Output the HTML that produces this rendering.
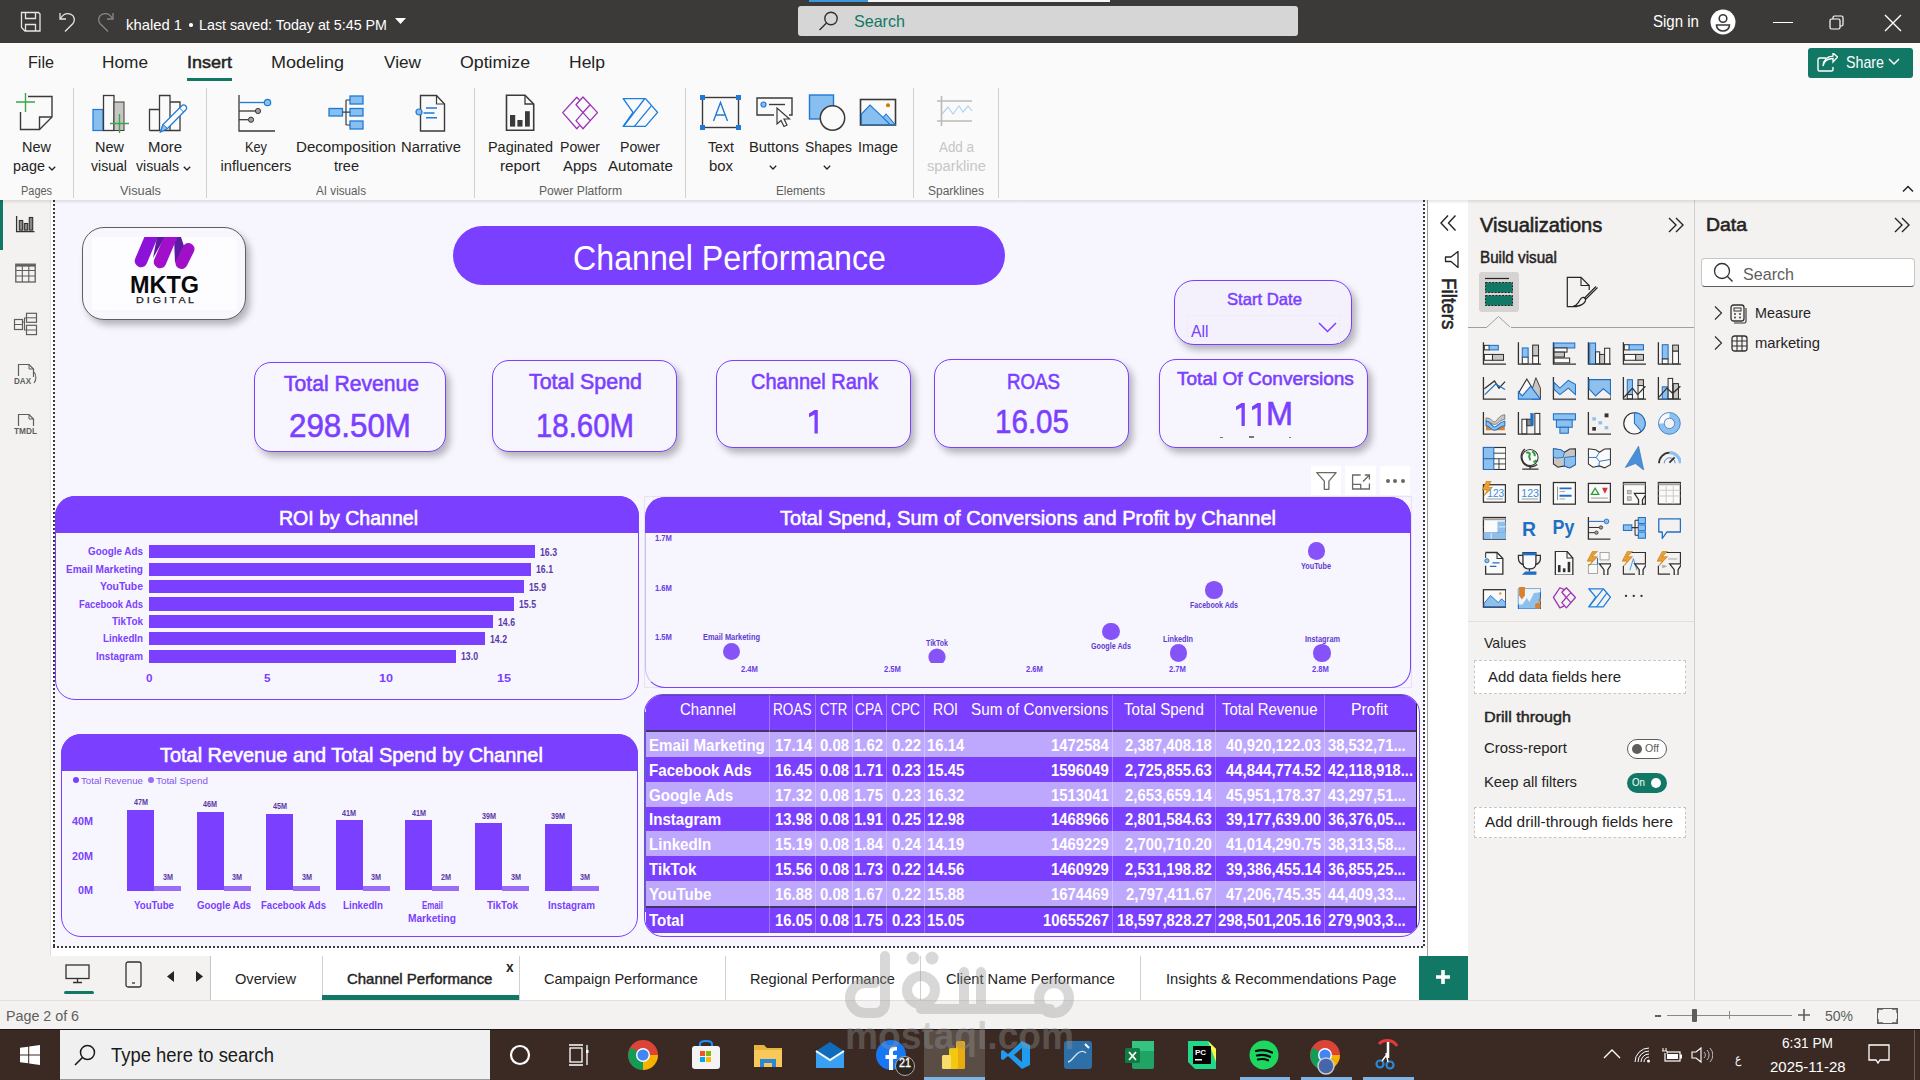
<!DOCTYPE html><html><head><meta charset="utf-8"><style>html,body{margin:0;padding:0;width:1920px;height:1080px;overflow:hidden;background:#fff;}body{position:relative;font-family:"Liberation Sans",sans-serif;}</style></head><body><div style="position:absolute;left:50px;top:200px;width:1378px;height:756px;background:#ffffff;"></div><div style="position:absolute;left:54px;top:200px;width:1370px;height:747px;background:#f7f5fe;"></div><div style="position:absolute;left:53px;top:200px;width:2px;height:747px;background:none;background-image:linear-gradient(#3b3a39 50%,transparent 50%);background-size:2px 4px;"></div><div style="position:absolute;left:1423px;top:200px;width:2px;height:747px;background:none;background-image:linear-gradient(#3b3a39 50%,transparent 50%);background-size:2px 4px;"></div><div style="position:absolute;left:53px;top:946px;width:1372px;height:2px;background:none;background-image:linear-gradient(90deg,#3b3a39 50%,transparent 50%);background-size:4px 2px;"></div><div style="position:absolute;left:82px;top:227px;width:163.5px;height:92.5px;background:#f8f7fd;border:1px solid #605e5c;border-radius:22px;box-sizing:border-box;box-shadow:4px 5px 7px rgba(0,0,0,0.27);"></div><div style="position:absolute;left:92px;top:237px;width:145px;height:73px;background:#fdfcff;"></div><svg style="position:absolute;left:128px;top:237px" width="70" height="36" viewBox="128 237 70 36"><path d="M157 237L165 237L153 258Z" fill="#5a1a9e"/><path d="M174 237L181 237L185 249L175 263Z" fill="#5e1aa2"/><path d="M141 261L152 235" stroke="#8c12da" stroke-width="12.5" stroke-linecap="round" fill="none"/><path d="M160 262L171.5 235" stroke="#a20fcb" stroke-width="12.5" stroke-linecap="round" fill="none"/><path d="M181.5 263L188.5 249" stroke="#a010c9" stroke-width="12" stroke-linecap="round" fill="none"/><rect x="128" y="224" width="70" height="13" fill="#fdfcff"/></svg><div style="position:absolute;left:130.00px;top:272.50px;font-size:24.56px;line-height:24.56px;color:#0a0a0a;font-weight:700;transform:scaleX(0.9541);transform-origin:0 0;white-space:pre;">MKTG</div><div style="position:absolute;left:135.70px;top:296.16px;font-size:8.43px;line-height:8.43px;color:#1a1a1a;-webkit-text-stroke:0.25px #1a1a1a;transform:scaleX(1.2717);transform-origin:0 0;white-space:pre;">D I G I T A L</div><div style="position:absolute;left:453px;top:226px;width:552px;height:59px;background:#7b3fff;border-radius:30px;"></div><div style="position:absolute;left:572.50px;top:241.35px;font-size:35.61px;line-height:35.61px;color:#fff;transform:scaleX(0.9035);transform-origin:0 0;white-space:pre;">Channel Performance</div><div style="position:absolute;left:1174px;top:280px;width:178px;height:65px;background:#f4f1fd;border:1.6px solid #7b3fff;border-radius:20px;box-sizing:border-box;box-shadow:4px 5px 7px rgba(0,0,0,0.27);"></div><div style="position:absolute;left:1187px;top:315px;width:153px;height:28px;background:none;border:1px dotted #ebe7f6;border-bottom:none;box-sizing:border-box;"></div><div style="position:absolute;left:1227.00px;top:290.92px;font-size:16.28px;line-height:16.28px;color:#7b3fff;-webkit-text-stroke:0.49px #7b3fff;transform:scaleX(1.0233);transform-origin:0 0;white-space:pre;">Start Date</div><div style="position:absolute;left:1191.00px;top:322.92px;font-size:16.28px;line-height:16.28px;color:#7b3fff;transform:scaleX(0.9731);transform-origin:0 0;white-space:pre;">All</div><svg style="position:absolute;left:1318px;top:322px;" width="19" height="11" viewBox="0 0 19 11"><path d="M1 1l8.5 8.5L18 1" fill="none" stroke="#7b3fff" stroke-width="1.5"/></svg><div style="position:absolute;left:254px;top:362px;width:192px;height:90px;background:#f7f5fe;border:1.8px solid #7b3fff;border-radius:17px;box-sizing:border-box;box-shadow:4px 5px 7px rgba(0,0,0,0.27);"></div><div style="position:absolute;left:284.00px;top:372.62px;font-size:22.53px;line-height:22.53px;color:#7b3fff;-webkit-text-stroke:0.60px #7b3fff;transform:scaleX(0.9373);transform-origin:0 0;white-space:pre;">Total Revenue</div><div style="position:absolute;left:289.00px;top:408.69px;font-size:33.43px;line-height:33.43px;color:#7b3fff;-webkit-text-stroke:0.60px #7b3fff;transform:scaleX(0.9376);transform-origin:0 0;white-space:pre;">298.50M</div><div style="position:absolute;left:492px;top:360px;width:185px;height:92px;background:#f7f5fe;border:1.8px solid #7b3fff;border-radius:17px;box-sizing:border-box;box-shadow:4px 5px 7px rgba(0,0,0,0.27);"></div><div style="position:absolute;left:529.00px;top:370.92px;font-size:22.53px;line-height:22.53px;color:#7b3fff;-webkit-text-stroke:0.60px #7b3fff;transform:scaleX(0.9496);transform-origin:0 0;white-space:pre;">Total Spend</div><div style="position:absolute;left:536.00px;top:408.69px;font-size:33.43px;line-height:33.43px;color:#7b3fff;-webkit-text-stroke:0.60px #7b3fff;transform:scaleX(0.8790);transform-origin:0 0;white-space:pre;">18.60M</div><div style="position:absolute;left:716px;top:360px;width:195px;height:88px;background:#f7f5fe;border:1.8px solid #7b3fff;border-radius:17px;box-sizing:border-box;box-shadow:4px 5px 7px rgba(0,0,0,0.27);"></div><div style="position:absolute;left:751.00px;top:370.54px;font-size:21.80px;line-height:21.80px;color:#7b3fff;-webkit-text-stroke:0.60px #7b3fff;transform:scaleX(0.9189);transform-origin:0 0;white-space:pre;">Channel Rank</div><div style="position:absolute;left:934px;top:359px;width:195px;height:89px;background:#f7f5fe;border:1.8px solid #7b3fff;border-radius:17px;box-sizing:border-box;box-shadow:4px 5px 7px rgba(0,0,0,0.27);"></div><div style="position:absolute;left:1007.00px;top:370.54px;font-size:21.80px;line-height:21.80px;color:#7b3fff;-webkit-text-stroke:0.60px #7b3fff;transform:scaleX(0.8578);transform-origin:0 0;white-space:pre;">ROAS</div><div style="position:absolute;left:995.00px;top:404.69px;font-size:33.43px;line-height:33.43px;color:#7b3fff;-webkit-text-stroke:0.60px #7b3fff;transform:scaleX(0.8847);transform-origin:0 0;white-space:pre;">16.05</div><div style="position:absolute;left:1159px;top:359px;width:209px;height:89px;background:#f7f5fe;border:1.8px solid #7b3fff;border-radius:17px;box-sizing:border-box;box-shadow:4px 5px 7px rgba(0,0,0,0.27);"></div><div style="position:absolute;left:1177.00px;top:370.22px;font-size:18.17px;line-height:18.17px;color:#7b3fff;-webkit-text-stroke:0.55px #7b3fff;transform:scaleX(1.0495);transform-origin:0 0;white-space:pre;">Total Of Conversions</div><svg style="position:absolute;left:808.2px;top:409px" width="10.8" height="25.600000000000023"><path d="M6.5 1H9.8V24.600000000000023H6.5V5.5L1 8.2V4.6Z" fill="#7b3fff"/></svg><svg style="position:absolute;left:1235.0px;top:401.5px" width="10.8" height="25.0"><path d="M6.5 1H9.8V24.0H6.5V5.5L1 8.2V4.6Z" fill="#7b3fff"/></svg><svg style="position:absolute;left:1250.9px;top:401.5px" width="10.8" height="25.0"><path d="M6.5 1H9.8V24.0H6.5V5.5L1 8.2V4.6Z" fill="#7b3fff"/></svg><div style="position:absolute;left:1266.00px;top:397.19px;font-size:33.43px;line-height:33.43px;color:#7b3fff;-webkit-text-stroke:0.60px #7b3fff;transform:scaleX(0.9696);transform-origin:0 0;white-space:pre;">M</div><div style="position:absolute;left:1220px;top:437px;width:3px;height:1px;background:#777;"></div><div style="position:absolute;left:1249px;top:436px;width:5px;height:2px;background:#777;"></div><div style="position:absolute;left:1289px;top:437px;width:2px;height:1px;background:#777;"></div><div style="position:absolute;left:1311px;top:466px;width:30px;height:28.5px;background:#ffffff;"></div><div style="position:absolute;left:1345px;top:466px;width:31px;height:28.5px;background:#ffffff;"></div><div style="position:absolute;left:1380px;top:466px;width:30px;height:28.5px;background:#ffffff;"></div><svg style="position:absolute;left:1311px;top:466px;" width="30" height="28" viewBox="0 0 30 28"><path d="M5.7 6.6h19.4l-7.2 8.5v8.2h-4.6v-8.2z" fill="none" stroke="#6b6866" stroke-width="1.3" stroke-linejoin="round"/></svg><svg style="position:absolute;left:1345px;top:466px;" width="31" height="28" viewBox="0 0 31 28"><path d="M15.7 9H7.6v14h16.8v-5.6M7.6 18.3h8.1V23" fill="none" stroke="#6b6866" stroke-width="1.3"/><path d="M18 15.5L24.4 9M19.8 9h4.6v4.6" fill="none" stroke="#6b6866" stroke-width="1.3"/></svg><div style="position:absolute;left:1386px;top:479px;width:4px;height:4px;background:#6b6866;border-radius:50%;"></div><div style="position:absolute;left:1393.4px;top:479px;width:4px;height:4px;background:#6b6866;border-radius:50%;"></div><div style="position:absolute;left:1400.9px;top:479px;width:4px;height:4px;background:#6b6866;border-radius:50%;"></div><div style="position:absolute;left:55px;top:496px;width:584px;height:204px;background:#f7f5fe;border:1.6px solid #7b3fff;border-radius:20px;box-sizing:border-box;overflow:hidden;"></div><div style="position:absolute;left:55px;top:496px;width:584px;height:37px;background:#7b3fff;border-radius:20px 20px 0 0;"></div><div style="position:absolute;left:279.00px;top:507.16px;font-size:21.08px;line-height:21.08px;color:#fff;-webkit-text-stroke:0.60px #fff;transform:scaleX(0.9269);transform-origin:0 0;white-space:pre;">ROI by Channel</div><div style="position:absolute;left:149px;top:545.0px;width:386px;height:13.3px;background:#7b3fff;"></div><div style="position:absolute;left:88.30px;top:546.19px;font-size:10.76px;line-height:10.76px;color:#7b3fff;font-weight:700;transform:scaleX(0.9174);transform-origin:0 0;white-space:pre;">Google Ads</div><div style="position:absolute;left:540.00px;top:547.74px;font-size:10.47px;line-height:10.47px;color:#5a3aa8;font-weight:700;transform:scaleX(0.8347);transform-origin:0 0;white-space:pre;">16.3</div><div style="position:absolute;left:149px;top:562.5px;width:382px;height:13.3px;background:#7b3fff;"></div><div style="position:absolute;left:66.30px;top:563.64px;font-size:10.76px;line-height:10.76px;color:#7b3fff;font-weight:700;transform:scaleX(0.9335);transform-origin:0 0;white-space:pre;">Email Marketing</div><div style="position:absolute;left:536.00px;top:565.19px;font-size:10.47px;line-height:10.47px;color:#5a3aa8;font-weight:700;transform:scaleX(0.8347);transform-origin:0 0;white-space:pre;">16.1</div><div style="position:absolute;left:149px;top:579.9px;width:375.3px;height:13.3px;background:#7b3fff;"></div><div style="position:absolute;left:100.30px;top:581.09px;font-size:10.76px;line-height:10.76px;color:#7b3fff;font-weight:700;transform:scaleX(0.9682);transform-origin:0 0;white-space:pre;">YouTube</div><div style="position:absolute;left:529.30px;top:582.64px;font-size:10.47px;line-height:10.47px;color:#5a3aa8;font-weight:700;transform:scaleX(0.8347);transform-origin:0 0;white-space:pre;">15.9</div><div style="position:absolute;left:149px;top:597.4px;width:365.4px;height:13.3px;background:#7b3fff;"></div><div style="position:absolute;left:79.30px;top:598.54px;font-size:10.76px;line-height:10.76px;color:#7b3fff;font-weight:700;transform:scaleX(0.8753);transform-origin:0 0;white-space:pre;">Facebook Ads</div><div style="position:absolute;left:519.40px;top:600.09px;font-size:10.47px;line-height:10.47px;color:#5a3aa8;font-weight:700;transform:scaleX(0.8347);transform-origin:0 0;white-space:pre;">15.5</div><div style="position:absolute;left:149px;top:614.8px;width:344.4px;height:13.3px;background:#7b3fff;"></div><div style="position:absolute;left:112.30px;top:615.99px;font-size:10.76px;line-height:10.76px;color:#7b3fff;font-weight:700;transform:scaleX(0.9202);transform-origin:0 0;white-space:pre;">TikTok</div><div style="position:absolute;left:498.40px;top:617.54px;font-size:10.47px;line-height:10.47px;color:#5a3aa8;font-weight:700;transform:scaleX(0.8347);transform-origin:0 0;white-space:pre;">14.6</div><div style="position:absolute;left:149px;top:632.2px;width:335.6px;height:13.3px;background:#7b3fff;"></div><div style="position:absolute;left:103.30px;top:633.44px;font-size:10.76px;line-height:10.76px;color:#7b3fff;font-weight:700;transform:scaleX(0.9046);transform-origin:0 0;white-space:pre;">LinkedIn</div><div style="position:absolute;left:489.60px;top:634.99px;font-size:10.47px;line-height:10.47px;color:#5a3aa8;font-weight:700;transform:scaleX(0.8347);transform-origin:0 0;white-space:pre;">14.2</div><div style="position:absolute;left:149px;top:649.7px;width:307px;height:13.3px;background:#7b3fff;"></div><div style="position:absolute;left:96.30px;top:650.89px;font-size:10.76px;line-height:10.76px;color:#7b3fff;font-weight:700;transform:scaleX(0.9143);transform-origin:0 0;white-space:pre;">Instagram</div><div style="position:absolute;left:461.00px;top:652.44px;font-size:10.47px;line-height:10.47px;color:#5a3aa8;font-weight:700;transform:scaleX(0.8347);transform-origin:0 0;white-space:pre;">13.0</div><div style="position:absolute;left:145.95px;top:673.32px;font-size:10.61px;line-height:10.61px;color:#7b3fff;font-weight:700;transform:scaleX(1.1018);transform-origin:0 0;white-space:pre;">0</div><div style="position:absolute;left:263.95px;top:673.32px;font-size:10.61px;line-height:10.61px;color:#7b3fff;font-weight:700;transform:scaleX(1.1018);transform-origin:0 0;white-space:pre;">5</div><div style="position:absolute;left:379.00px;top:673.32px;font-size:10.61px;line-height:10.61px;color:#7b3fff;font-weight:700;transform:scaleX(1.1865);transform-origin:0 0;white-space:pre;">10</div><div style="position:absolute;left:497.00px;top:673.32px;font-size:10.61px;line-height:10.61px;color:#7b3fff;font-weight:700;transform:scaleX(1.1865);transform-origin:0 0;white-space:pre;">15</div><div style="position:absolute;left:644px;top:496px;width:768px;height:192px;background:none;border:1px solid #e6e3ee;box-sizing:border-box;"></div><div style="position:absolute;left:644.5px;top:497px;width:766.5px;height:191px;background:#f7f5fe;border:1.6px solid #7b3fff;border-left-color:#cdbdff;border-radius:20px;box-sizing:border-box;overflow:hidden;"></div><div style="position:absolute;left:644.5px;top:497px;width:766.5px;height:36px;background:#7b3fff;border-radius:20px 20px 0 0;"></div><div style="position:absolute;left:780.00px;top:507.16px;font-size:21.08px;line-height:21.08px;color:#fff;-webkit-text-stroke:0.60px #fff;transform:scaleX(0.9514);transform-origin:0 0;white-space:pre;">Total Spend, Sum of Conversions and Profit by Channel</div><div style="position:absolute;left:654.50px;top:533.97px;font-size:9.01px;line-height:9.01px;color:#6a3de8;font-weight:700;transform:scaleX(0.8486);transform-origin:0 0;white-space:pre;">1.7M</div><div style="position:absolute;left:654.50px;top:583.97px;font-size:9.01px;line-height:9.01px;color:#6a3de8;font-weight:700;transform:scaleX(0.8486);transform-origin:0 0;white-space:pre;">1.6M</div><div style="position:absolute;left:654.50px;top:633.07px;font-size:9.01px;line-height:9.01px;color:#6a3de8;font-weight:700;transform:scaleX(0.8486);transform-origin:0 0;white-space:pre;">1.5M</div><div style="position:absolute;left:741.20px;top:664.57px;font-size:9.01px;line-height:9.01px;color:#6a3de8;font-weight:700;transform:scaleX(0.8486);transform-origin:0 0;white-space:pre;">2.4M</div><div style="position:absolute;left:883.90px;top:664.57px;font-size:9.01px;line-height:9.01px;color:#6a3de8;font-weight:700;transform:scaleX(0.8486);transform-origin:0 0;white-space:pre;">2.5M</div><div style="position:absolute;left:1026.40px;top:664.57px;font-size:9.01px;line-height:9.01px;color:#6a3de8;font-weight:700;transform:scaleX(0.8486);transform-origin:0 0;white-space:pre;">2.6M</div><div style="position:absolute;left:1168.80px;top:664.57px;font-size:9.01px;line-height:9.01px;color:#6a3de8;font-weight:700;transform:scaleX(0.8486);transform-origin:0 0;white-space:pre;">2.7M</div><div style="position:absolute;left:1311.50px;top:664.57px;font-size:9.01px;line-height:9.01px;color:#6a3de8;font-weight:700;transform:scaleX(0.8486);transform-origin:0 0;white-space:pre;">2.8M</div><div style="position:absolute;left:723.0px;top:642.8px;width:17.2px;height:17.2px;background:#8553f8;border-radius:50%;"></div><div style="position:absolute;left:703.00px;top:632.82px;font-size:9.30px;line-height:9.30px;color:#5f3bd0;font-weight:700;transform:scaleX(0.7990);transform-origin:0 0;white-space:pre;">Email Marketing</div><svg style="position:absolute;left:927.6px;top:647.8px;" width="18" height="15" viewBox="0 0 18 15"><circle cx="9" cy="9" r="8.6" fill="#8553f8"/></svg><div style="position:absolute;left:925.60px;top:638.72px;font-size:9.30px;line-height:9.30px;color:#5f3bd0;font-weight:700;transform:scaleX(0.7551);transform-origin:0 0;white-space:pre;">TikTok</div><div style="position:absolute;left:1102.4px;top:622.5px;width:17.2px;height:17.2px;background:#8553f8;border-radius:50%;"></div><div style="position:absolute;left:1091.00px;top:641.62px;font-size:9.30px;line-height:9.30px;color:#5f3bd0;font-weight:700;transform:scaleX(0.7714);transform-origin:0 0;white-space:pre;">Google Ads</div><div style="position:absolute;left:1169.7px;top:644.4px;width:17.2px;height:17.2px;background:#8553f8;border-radius:50%;"></div><div style="position:absolute;left:1163.30px;top:634.52px;font-size:9.30px;line-height:9.30px;color:#5f3bd0;font-weight:700;transform:scaleX(0.7845);transform-origin:0 0;white-space:pre;">LinkedIn</div><div style="position:absolute;left:1205.4px;top:581.4px;width:17.2px;height:17.2px;background:#8553f8;border-radius:50%;"></div><div style="position:absolute;left:1190.00px;top:600.62px;font-size:9.30px;line-height:9.30px;color:#5f3bd0;font-weight:700;transform:scaleX(0.7590);transform-origin:0 0;white-space:pre;">Facebook Ads</div><div style="position:absolute;left:1307.6px;top:542.4px;width:17.2px;height:17.2px;background:#8553f8;border-radius:50%;"></div><div style="position:absolute;left:1301.20px;top:561.52px;font-size:9.30px;line-height:9.30px;color:#5f3bd0;font-weight:700;transform:scaleX(0.7810);transform-origin:0 0;white-space:pre;">YouTube</div><div style="position:absolute;left:1313.4px;top:644.4px;width:17.2px;height:17.2px;background:#8553f8;border-radius:50%;"></div><div style="position:absolute;left:1304.50px;top:634.82px;font-size:9.30px;line-height:9.30px;color:#5f3bd0;font-weight:700;transform:scaleX(0.7873);transform-origin:0 0;white-space:pre;">Instagram</div><div style="position:absolute;left:61px;top:733.5px;width:577px;height:203.5px;background:#f7f5fe;border:1.6px solid #7b3fff;border-radius:20px;box-sizing:border-box;overflow:hidden;"></div><div style="position:absolute;left:61px;top:733.5px;width:577px;height:37px;background:#7b3fff;border-radius:20px 20px 0 0;"></div><div style="position:absolute;left:160.00px;top:744.16px;font-size:21.08px;line-height:21.08px;color:#fff;-webkit-text-stroke:0.60px #fff;transform:scaleX(0.9451);transform-origin:0 0;white-space:pre;">Total Revenue and Total Spend by Channel</div><div style="position:absolute;left:73px;top:777px;width:6px;height:6px;background:#7b3fff;border-radius:50%;"></div><div style="position:absolute;left:80.50px;top:775.63px;font-size:9.88px;line-height:9.88px;color:#7f55f0;transform:scaleX(0.9812);transform-origin:0 0;white-space:pre;">Total Revenue</div><div style="position:absolute;left:148px;top:777px;width:6px;height:6px;background:#9a6cf8;border-radius:50%;"></div><div style="position:absolute;left:155.50px;top:775.63px;font-size:9.88px;line-height:9.88px;color:#7f55f0;transform:scaleX(0.9960);transform-origin:0 0;white-space:pre;">Total Spend</div><div style="position:absolute;left:71.80px;top:815.85px;font-size:11.05px;line-height:11.05px;color:#7b3fff;font-weight:700;transform:scaleX(0.9774);transform-origin:0 0;white-space:pre;">40M</div><div style="position:absolute;left:71.80px;top:850.85px;font-size:11.05px;line-height:11.05px;color:#7b3fff;font-weight:700;transform:scaleX(0.9774);transform-origin:0 0;white-space:pre;">20M</div><div style="position:absolute;left:77.80px;top:884.85px;font-size:11.05px;line-height:11.05px;color:#7b3fff;font-weight:700;transform:scaleX(0.9776);transform-origin:0 0;white-space:pre;">0M</div><div style="position:absolute;left:127.0px;top:809.5px;width:27px;height:81.0px;background:#7b3fff;"></div><div style="position:absolute;left:154.0px;top:886px;width:27px;height:4.5px;background:#9a6cf8;"></div><div style="position:absolute;left:133.50px;top:797.99px;font-size:8.29px;line-height:8.29px;color:#5a3aa8;font-weight:700;transform:scaleX(0.8688);transform-origin:0 0;white-space:pre;">47M</div><div style="position:absolute;left:162.50px;top:873.49px;font-size:8.29px;line-height:8.29px;color:#5a3aa8;font-weight:700;transform:scaleX(0.8690);transform-origin:0 0;white-space:pre;">3M</div><div style="position:absolute;left:134.00px;top:900.02px;font-size:10.61px;line-height:10.61px;color:#7b3fff;font-weight:700;transform:scaleX(0.9130);transform-origin:0 0;white-space:pre;">YouTube</div><div style="position:absolute;left:196.6px;top:811.7px;width:27px;height:78.8px;background:#7b3fff;"></div><div style="position:absolute;left:223.6px;top:886px;width:27px;height:4.5px;background:#9a6cf8;"></div><div style="position:absolute;left:203.10px;top:800.19px;font-size:8.29px;line-height:8.29px;color:#5a3aa8;font-weight:700;transform:scaleX(0.8688);transform-origin:0 0;white-space:pre;">46M</div><div style="position:absolute;left:232.10px;top:873.49px;font-size:8.29px;line-height:8.29px;color:#5a3aa8;font-weight:700;transform:scaleX(0.8690);transform-origin:0 0;white-space:pre;">3M</div><div style="position:absolute;left:196.60px;top:900.02px;font-size:10.61px;line-height:10.61px;color:#7b3fff;font-weight:700;transform:scaleX(0.9130);transform-origin:0 0;white-space:pre;">Google Ads</div><div style="position:absolute;left:266.2px;top:813.7px;width:27px;height:76.8px;background:#7b3fff;"></div><div style="position:absolute;left:293.2px;top:886px;width:27px;height:4.5px;background:#9a6cf8;"></div><div style="position:absolute;left:272.70px;top:802.19px;font-size:8.29px;line-height:8.29px;color:#5a3aa8;font-weight:700;transform:scaleX(0.8688);transform-origin:0 0;white-space:pre;">45M</div><div style="position:absolute;left:301.70px;top:873.49px;font-size:8.29px;line-height:8.29px;color:#5a3aa8;font-weight:700;transform:scaleX(0.8690);transform-origin:0 0;white-space:pre;">3M</div><div style="position:absolute;left:260.70px;top:900.02px;font-size:10.61px;line-height:10.61px;color:#7b3fff;font-weight:700;transform:scaleX(0.9011);transform-origin:0 0;white-space:pre;">Facebook Ads</div><div style="position:absolute;left:335.8px;top:820.2px;width:27px;height:70.3px;background:#7b3fff;"></div><div style="position:absolute;left:362.8px;top:886px;width:27px;height:4.5px;background:#9a6cf8;"></div><div style="position:absolute;left:342.30px;top:808.69px;font-size:8.29px;line-height:8.29px;color:#5a3aa8;font-weight:700;transform:scaleX(0.8688);transform-origin:0 0;white-space:pre;">41M</div><div style="position:absolute;left:371.30px;top:873.49px;font-size:8.29px;line-height:8.29px;color:#5a3aa8;font-weight:700;transform:scaleX(0.8690);transform-origin:0 0;white-space:pre;">3M</div><div style="position:absolute;left:342.80px;top:900.02px;font-size:10.61px;line-height:10.61px;color:#7b3fff;font-weight:700;transform:scaleX(0.9170);transform-origin:0 0;white-space:pre;">LinkedIn</div><div style="position:absolute;left:405.4px;top:820.2px;width:27px;height:70.3px;background:#7b3fff;"></div><div style="position:absolute;left:432.4px;top:886px;width:27px;height:4.5px;background:#9a6cf8;"></div><div style="position:absolute;left:411.90px;top:808.69px;font-size:8.29px;line-height:8.29px;color:#5a3aa8;font-weight:700;transform:scaleX(0.8688);transform-origin:0 0;white-space:pre;">41M</div><div style="position:absolute;left:440.90px;top:873.49px;font-size:8.29px;line-height:8.29px;color:#5a3aa8;font-weight:700;transform:scaleX(0.8690);transform-origin:0 0;white-space:pre;">2M</div><div style="position:absolute;left:421.90px;top:900.02px;font-size:10.61px;line-height:10.61px;color:#7b3fff;font-weight:700;transform:scaleX(0.7418);transform-origin:0 0;white-space:pre;">Email</div><div style="position:absolute;left:408.40px;top:913.02px;font-size:10.61px;line-height:10.61px;color:#7b3fff;font-weight:700;transform:scaleX(0.9578);transform-origin:0 0;white-space:pre;">Marketing</div><div style="position:absolute;left:475.0px;top:823.2px;width:27px;height:67.3px;background:#7b3fff;"></div><div style="position:absolute;left:502.0px;top:886px;width:27px;height:4.5px;background:#9a6cf8;"></div><div style="position:absolute;left:481.50px;top:811.69px;font-size:8.29px;line-height:8.29px;color:#5a3aa8;font-weight:700;transform:scaleX(0.8688);transform-origin:0 0;white-space:pre;">39M</div><div style="position:absolute;left:510.50px;top:873.49px;font-size:8.29px;line-height:8.29px;color:#5a3aa8;font-weight:700;transform:scaleX(0.8690);transform-origin:0 0;white-space:pre;">3M</div><div style="position:absolute;left:486.50px;top:900.02px;font-size:10.61px;line-height:10.61px;color:#7b3fff;font-weight:700;transform:scaleX(0.9328);transform-origin:0 0;white-space:pre;">TikTok</div><div style="position:absolute;left:544.6px;top:823.5px;width:27px;height:67.0px;background:#7b3fff;"></div><div style="position:absolute;left:571.6px;top:886px;width:27px;height:4.5px;background:#9a6cf8;"></div><div style="position:absolute;left:551.10px;top:811.99px;font-size:8.29px;line-height:8.29px;color:#5a3aa8;font-weight:700;transform:scaleX(0.8688);transform-origin:0 0;white-space:pre;">39M</div><div style="position:absolute;left:580.10px;top:873.49px;font-size:8.29px;line-height:8.29px;color:#5a3aa8;font-weight:700;transform:scaleX(0.8690);transform-origin:0 0;white-space:pre;">3M</div><div style="position:absolute;left:548.10px;top:900.02px;font-size:10.61px;line-height:10.61px;color:#7b3fff;font-weight:700;transform:scaleX(0.9269);transform-origin:0 0;white-space:pre;">Instagram</div><div style="position:absolute;left:644px;top:694px;width:776px;height:242.5px;box-sizing:border-box;border:1.4px solid #7b3fff;border-radius:19px;overflow:hidden;background:#f7f5fe;"><div style="position:absolute;left:-645.4px;top:-695.4px;width:1920px;height:1080px;"><div style="position:absolute;left:646.5px;top:695px;width:770.5px;height:36px;background:#7b3fff;"></div><div style="position:absolute;left:646.5px;top:695px;width:770.5px;height:1.5px;background:#5d4f8e;"></div><div style="position:absolute;left:646.5px;top:730.5px;width:770.5px;height:2px;background:#3e3466;"></div><div style="position:absolute;left:646.5px;top:732.5px;width:770.5px;height:24.9px;background:#bea8fe;"></div><div style="position:absolute;left:646.5px;top:757.3px;width:770.5px;height:24.9px;background:#7b3fff;"></div><div style="position:absolute;left:646.5px;top:782.1px;width:770.5px;height:24.9px;background:#bea8fe;"></div><div style="position:absolute;left:646.5px;top:806.9px;width:770.5px;height:24.9px;background:#7b3fff;"></div><div style="position:absolute;left:646.5px;top:831.7px;width:770.5px;height:24.9px;background:#bea8fe;"></div><div style="position:absolute;left:646.5px;top:856.5px;width:770.5px;height:24.9px;background:#7b3fff;"></div><div style="position:absolute;left:646.5px;top:881.3px;width:770.5px;height:24.9px;background:#bea8fe;"></div><div style="position:absolute;left:646.5px;top:906px;width:770.5px;height:2px;background:#3e3466;"></div><div style="position:absolute;left:646.5px;top:908px;width:770.5px;height:25px;background:#7b3fff;"></div><div style="position:absolute;left:646.5px;top:932px;width:770.5px;height:1px;background:#6a4ad8;"></div><div style="position:absolute;left:645.5px;top:712px;width:1px;height:200px;background:#5a6a9a;"></div><div style="position:absolute;left:769.4px;top:695px;width:1px;height:238px;background:rgba(255,255,255,0.28);"></div><div style="position:absolute;left:815.3px;top:695px;width:1px;height:238px;background:rgba(255,255,255,0.28);"></div><div style="position:absolute;left:852.3px;top:695px;width:1px;height:238px;background:rgba(255,255,255,0.28);"></div><div style="position:absolute;left:886.6px;top:695px;width:1px;height:238px;background:rgba(255,255,255,0.28);"></div><div style="position:absolute;left:924.4px;top:695px;width:1px;height:238px;background:rgba(255,255,255,0.28);"></div><div style="position:absolute;left:1112.5px;top:695px;width:1px;height:238px;background:rgba(255,255,255,0.28);"></div><div style="position:absolute;left:1215.5px;top:695px;width:1px;height:238px;background:rgba(255,255,255,0.28);"></div><div style="position:absolute;left:1324.3px;top:695px;width:1px;height:238px;background:rgba(255,255,255,0.28);"></div><div style="position:absolute;left:1416.2px;top:695px;width:1.3px;height:238px;background:#262433;"></div><div style="position:absolute;left:679.90px;top:701.29px;font-size:16.42px;line-height:16.42px;color:#fff;transform:scaleX(0.9153);transform-origin:0 0;white-space:pre;">Channel</div><div style="position:absolute;left:773.05px;top:701.29px;font-size:16.42px;line-height:16.42px;color:#fff;transform:scaleX(0.8293);transform-origin:0 0;white-space:pre;">ROAS</div><div style="position:absolute;left:820.15px;top:701.29px;font-size:16.42px;line-height:16.42px;color:#fff;transform:scaleX(0.8088);transform-origin:0 0;white-space:pre;">CTR</div><div style="position:absolute;left:855.75px;top:701.29px;font-size:16.42px;line-height:16.42px;color:#fff;transform:scaleX(0.8417);transform-origin:0 0;white-space:pre;">CPA</div><div style="position:absolute;left:891.00px;top:701.29px;font-size:16.42px;line-height:16.42px;color:#fff;transform:scaleX(0.8364);transform-origin:0 0;white-space:pre;">CPC</div><div style="position:absolute;left:933.40px;top:701.29px;font-size:16.42px;line-height:16.42px;color:#fff;transform:scaleX(0.8561);transform-origin:0 0;white-space:pre;">ROI</div><div style="position:absolute;left:971.50px;top:701.29px;font-size:16.42px;line-height:16.42px;color:#fff;transform:scaleX(0.9298);transform-origin:0 0;white-space:pre;">Sum of Conversions</div><div style="position:absolute;left:1124.00px;top:701.29px;font-size:16.42px;line-height:16.42px;color:#fff;transform:scaleX(0.9221);transform-origin:0 0;white-space:pre;">Total Spend</div><div style="position:absolute;left:1222.10px;top:701.29px;font-size:16.42px;line-height:16.42px;color:#fff;transform:scaleX(0.9104);transform-origin:0 0;white-space:pre;">Total Revenue</div><div style="position:absolute;left:1351.80px;top:701.29px;font-size:16.42px;line-height:16.42px;color:#fff;transform:scaleX(0.9652);transform-origin:0 0;white-space:pre;">Profit</div><div style="position:absolute;left:649.50px;top:738.46px;font-size:15.99px;line-height:15.99px;color:#fff;font-weight:700;transform:scaleX(0.9450);transform-origin:0 0;white-space:pre;">Email Marketing</div><div style="position:absolute;left:775.10px;top:738.46px;font-size:15.99px;line-height:15.99px;color:#fff;font-weight:700;transform:scaleX(0.9300);transform-origin:0 0;white-space:pre;">17.14</div><div style="position:absolute;left:820.36px;top:738.46px;font-size:15.99px;line-height:15.99px;color:#fff;font-weight:700;transform:scaleX(0.9300);transform-origin:0 0;white-space:pre;">0.08</div><div style="position:absolute;left:854.66px;top:738.46px;font-size:15.99px;line-height:15.99px;color:#fff;font-weight:700;transform:scaleX(0.9300);transform-origin:0 0;white-space:pre;">1.62</div><div style="position:absolute;left:892.46px;top:738.46px;font-size:15.99px;line-height:15.99px;color:#fff;font-weight:700;transform:scaleX(0.9300);transform-origin:0 0;white-space:pre;">0.22</div><div style="position:absolute;left:927.80px;top:738.46px;font-size:15.99px;line-height:15.99px;color:#fff;font-weight:700;transform:scaleX(0.9300);transform-origin:0 0;white-space:pre;">16.14</div><div style="position:absolute;left:1051.61px;top:738.46px;font-size:15.99px;line-height:15.99px;color:#fff;font-weight:700;transform:scaleX(0.9300);transform-origin:0 0;white-space:pre;">1472584</div><div style="position:absolute;left:1125.68px;top:738.46px;font-size:15.99px;line-height:15.99px;color:#fff;font-weight:700;transform:scaleX(0.9300);transform-origin:0 0;white-space:pre;">2,387,408.18</div><div style="position:absolute;left:1226.21px;top:738.46px;font-size:15.99px;line-height:15.99px;color:#fff;font-weight:700;transform:scaleX(0.9300);transform-origin:0 0;white-space:pre;">40,920,122.03</div><div style="position:absolute;left:1328.30px;top:738.46px;font-size:15.99px;line-height:15.99px;color:#fff;font-weight:700;transform:scaleX(0.9200);transform-origin:0 0;white-space:pre;">38,532,71...</div><div style="position:absolute;left:649.50px;top:763.26px;font-size:15.99px;line-height:15.99px;color:#fff;font-weight:700;transform:scaleX(0.9450);transform-origin:0 0;white-space:pre;">Facebook Ads</div><div style="position:absolute;left:775.10px;top:763.26px;font-size:15.99px;line-height:15.99px;color:#fff;font-weight:700;transform:scaleX(0.9300);transform-origin:0 0;white-space:pre;">16.45</div><div style="position:absolute;left:820.36px;top:763.26px;font-size:15.99px;line-height:15.99px;color:#fff;font-weight:700;transform:scaleX(0.9300);transform-origin:0 0;white-space:pre;">0.08</div><div style="position:absolute;left:854.66px;top:763.26px;font-size:15.99px;line-height:15.99px;color:#fff;font-weight:700;transform:scaleX(0.9300);transform-origin:0 0;white-space:pre;">1.71</div><div style="position:absolute;left:892.46px;top:763.26px;font-size:15.99px;line-height:15.99px;color:#fff;font-weight:700;transform:scaleX(0.9300);transform-origin:0 0;white-space:pre;">0.23</div><div style="position:absolute;left:927.80px;top:763.26px;font-size:15.99px;line-height:15.99px;color:#fff;font-weight:700;transform:scaleX(0.9300);transform-origin:0 0;white-space:pre;">15.45</div><div style="position:absolute;left:1051.61px;top:763.26px;font-size:15.99px;line-height:15.99px;color:#fff;font-weight:700;transform:scaleX(0.9300);transform-origin:0 0;white-space:pre;">1596049</div><div style="position:absolute;left:1125.68px;top:763.26px;font-size:15.99px;line-height:15.99px;color:#fff;font-weight:700;transform:scaleX(0.9300);transform-origin:0 0;white-space:pre;">2,725,855.63</div><div style="position:absolute;left:1226.21px;top:763.26px;font-size:15.99px;line-height:15.99px;color:#fff;font-weight:700;transform:scaleX(0.9300);transform-origin:0 0;white-space:pre;">44,844,774.52</div><div style="position:absolute;left:1328.30px;top:763.26px;font-size:15.99px;line-height:15.99px;color:#fff;font-weight:700;transform:scaleX(0.9200);transform-origin:0 0;white-space:pre;">42,118,918...</div><div style="position:absolute;left:649.50px;top:788.06px;font-size:15.99px;line-height:15.99px;color:#fff;font-weight:700;transform:scaleX(0.9450);transform-origin:0 0;white-space:pre;">Google Ads</div><div style="position:absolute;left:775.10px;top:788.06px;font-size:15.99px;line-height:15.99px;color:#fff;font-weight:700;transform:scaleX(0.9300);transform-origin:0 0;white-space:pre;">17.32</div><div style="position:absolute;left:820.36px;top:788.06px;font-size:15.99px;line-height:15.99px;color:#fff;font-weight:700;transform:scaleX(0.9300);transform-origin:0 0;white-space:pre;">0.08</div><div style="position:absolute;left:854.66px;top:788.06px;font-size:15.99px;line-height:15.99px;color:#fff;font-weight:700;transform:scaleX(0.9300);transform-origin:0 0;white-space:pre;">1.75</div><div style="position:absolute;left:892.46px;top:788.06px;font-size:15.99px;line-height:15.99px;color:#fff;font-weight:700;transform:scaleX(0.9300);transform-origin:0 0;white-space:pre;">0.23</div><div style="position:absolute;left:927.80px;top:788.06px;font-size:15.99px;line-height:15.99px;color:#fff;font-weight:700;transform:scaleX(0.9300);transform-origin:0 0;white-space:pre;">16.32</div><div style="position:absolute;left:1051.61px;top:788.06px;font-size:15.99px;line-height:15.99px;color:#fff;font-weight:700;transform:scaleX(0.9300);transform-origin:0 0;white-space:pre;">1513041</div><div style="position:absolute;left:1125.68px;top:788.06px;font-size:15.99px;line-height:15.99px;color:#fff;font-weight:700;transform:scaleX(0.9300);transform-origin:0 0;white-space:pre;">2,653,659.14</div><div style="position:absolute;left:1226.21px;top:788.06px;font-size:15.99px;line-height:15.99px;color:#fff;font-weight:700;transform:scaleX(0.9300);transform-origin:0 0;white-space:pre;">45,951,178.37</div><div style="position:absolute;left:1328.30px;top:788.06px;font-size:15.99px;line-height:15.99px;color:#fff;font-weight:700;transform:scaleX(0.9200);transform-origin:0 0;white-space:pre;">43,297,51...</div><div style="position:absolute;left:649.50px;top:812.86px;font-size:15.99px;line-height:15.99px;color:#fff;font-weight:700;transform:scaleX(0.9450);transform-origin:0 0;white-space:pre;">Instagram</div><div style="position:absolute;left:775.10px;top:812.86px;font-size:15.99px;line-height:15.99px;color:#fff;font-weight:700;transform:scaleX(0.9300);transform-origin:0 0;white-space:pre;">13.98</div><div style="position:absolute;left:820.36px;top:812.86px;font-size:15.99px;line-height:15.99px;color:#fff;font-weight:700;transform:scaleX(0.9300);transform-origin:0 0;white-space:pre;">0.08</div><div style="position:absolute;left:854.66px;top:812.86px;font-size:15.99px;line-height:15.99px;color:#fff;font-weight:700;transform:scaleX(0.9300);transform-origin:0 0;white-space:pre;">1.91</div><div style="position:absolute;left:892.46px;top:812.86px;font-size:15.99px;line-height:15.99px;color:#fff;font-weight:700;transform:scaleX(0.9300);transform-origin:0 0;white-space:pre;">0.25</div><div style="position:absolute;left:927.80px;top:812.86px;font-size:15.99px;line-height:15.99px;color:#fff;font-weight:700;transform:scaleX(0.9300);transform-origin:0 0;white-space:pre;">12.98</div><div style="position:absolute;left:1051.61px;top:812.86px;font-size:15.99px;line-height:15.99px;color:#fff;font-weight:700;transform:scaleX(0.9300);transform-origin:0 0;white-space:pre;">1468966</div><div style="position:absolute;left:1125.68px;top:812.86px;font-size:15.99px;line-height:15.99px;color:#fff;font-weight:700;transform:scaleX(0.9300);transform-origin:0 0;white-space:pre;">2,801,584.63</div><div style="position:absolute;left:1226.21px;top:812.86px;font-size:15.99px;line-height:15.99px;color:#fff;font-weight:700;transform:scaleX(0.9300);transform-origin:0 0;white-space:pre;">39,177,639.00</div><div style="position:absolute;left:1328.30px;top:812.86px;font-size:15.99px;line-height:15.99px;color:#fff;font-weight:700;transform:scaleX(0.9200);transform-origin:0 0;white-space:pre;">36,376,05...</div><div style="position:absolute;left:649.50px;top:837.66px;font-size:15.99px;line-height:15.99px;color:#fff;font-weight:700;transform:scaleX(0.9450);transform-origin:0 0;white-space:pre;">LinkedIn</div><div style="position:absolute;left:775.10px;top:837.66px;font-size:15.99px;line-height:15.99px;color:#fff;font-weight:700;transform:scaleX(0.9300);transform-origin:0 0;white-space:pre;">15.19</div><div style="position:absolute;left:820.36px;top:837.66px;font-size:15.99px;line-height:15.99px;color:#fff;font-weight:700;transform:scaleX(0.9300);transform-origin:0 0;white-space:pre;">0.08</div><div style="position:absolute;left:854.66px;top:837.66px;font-size:15.99px;line-height:15.99px;color:#fff;font-weight:700;transform:scaleX(0.9300);transform-origin:0 0;white-space:pre;">1.84</div><div style="position:absolute;left:892.46px;top:837.66px;font-size:15.99px;line-height:15.99px;color:#fff;font-weight:700;transform:scaleX(0.9300);transform-origin:0 0;white-space:pre;">0.24</div><div style="position:absolute;left:927.80px;top:837.66px;font-size:15.99px;line-height:15.99px;color:#fff;font-weight:700;transform:scaleX(0.9300);transform-origin:0 0;white-space:pre;">14.19</div><div style="position:absolute;left:1051.61px;top:837.66px;font-size:15.99px;line-height:15.99px;color:#fff;font-weight:700;transform:scaleX(0.9300);transform-origin:0 0;white-space:pre;">1469229</div><div style="position:absolute;left:1125.68px;top:837.66px;font-size:15.99px;line-height:15.99px;color:#fff;font-weight:700;transform:scaleX(0.9300);transform-origin:0 0;white-space:pre;">2,700,710.20</div><div style="position:absolute;left:1226.21px;top:837.66px;font-size:15.99px;line-height:15.99px;color:#fff;font-weight:700;transform:scaleX(0.9300);transform-origin:0 0;white-space:pre;">41,014,290.75</div><div style="position:absolute;left:1328.30px;top:837.66px;font-size:15.99px;line-height:15.99px;color:#fff;font-weight:700;transform:scaleX(0.9200);transform-origin:0 0;white-space:pre;">38,313,58...</div><div style="position:absolute;left:649.50px;top:862.46px;font-size:15.99px;line-height:15.99px;color:#fff;font-weight:700;transform:scaleX(0.9450);transform-origin:0 0;white-space:pre;">TikTok</div><div style="position:absolute;left:775.10px;top:862.46px;font-size:15.99px;line-height:15.99px;color:#fff;font-weight:700;transform:scaleX(0.9300);transform-origin:0 0;white-space:pre;">15.56</div><div style="position:absolute;left:820.36px;top:862.46px;font-size:15.99px;line-height:15.99px;color:#fff;font-weight:700;transform:scaleX(0.9300);transform-origin:0 0;white-space:pre;">0.08</div><div style="position:absolute;left:854.66px;top:862.46px;font-size:15.99px;line-height:15.99px;color:#fff;font-weight:700;transform:scaleX(0.9300);transform-origin:0 0;white-space:pre;">1.73</div><div style="position:absolute;left:892.46px;top:862.46px;font-size:15.99px;line-height:15.99px;color:#fff;font-weight:700;transform:scaleX(0.9300);transform-origin:0 0;white-space:pre;">0.22</div><div style="position:absolute;left:927.80px;top:862.46px;font-size:15.99px;line-height:15.99px;color:#fff;font-weight:700;transform:scaleX(0.9300);transform-origin:0 0;white-space:pre;">14.56</div><div style="position:absolute;left:1051.61px;top:862.46px;font-size:15.99px;line-height:15.99px;color:#fff;font-weight:700;transform:scaleX(0.9300);transform-origin:0 0;white-space:pre;">1460929</div><div style="position:absolute;left:1125.68px;top:862.46px;font-size:15.99px;line-height:15.99px;color:#fff;font-weight:700;transform:scaleX(0.9300);transform-origin:0 0;white-space:pre;">2,531,198.82</div><div style="position:absolute;left:1226.21px;top:862.46px;font-size:15.99px;line-height:15.99px;color:#fff;font-weight:700;transform:scaleX(0.9300);transform-origin:0 0;white-space:pre;">39,386,455.14</div><div style="position:absolute;left:1328.30px;top:862.46px;font-size:15.99px;line-height:15.99px;color:#fff;font-weight:700;transform:scaleX(0.9200);transform-origin:0 0;white-space:pre;">36,855,25...</div><div style="position:absolute;left:649.50px;top:887.26px;font-size:15.99px;line-height:15.99px;color:#fff;font-weight:700;transform:scaleX(0.9450);transform-origin:0 0;white-space:pre;">YouTube</div><div style="position:absolute;left:775.10px;top:887.26px;font-size:15.99px;line-height:15.99px;color:#fff;font-weight:700;transform:scaleX(0.9300);transform-origin:0 0;white-space:pre;">16.88</div><div style="position:absolute;left:820.36px;top:887.26px;font-size:15.99px;line-height:15.99px;color:#fff;font-weight:700;transform:scaleX(0.9300);transform-origin:0 0;white-space:pre;">0.08</div><div style="position:absolute;left:854.66px;top:887.26px;font-size:15.99px;line-height:15.99px;color:#fff;font-weight:700;transform:scaleX(0.9300);transform-origin:0 0;white-space:pre;">1.67</div><div style="position:absolute;left:892.46px;top:887.26px;font-size:15.99px;line-height:15.99px;color:#fff;font-weight:700;transform:scaleX(0.9300);transform-origin:0 0;white-space:pre;">0.22</div><div style="position:absolute;left:927.80px;top:887.26px;font-size:15.99px;line-height:15.99px;color:#fff;font-weight:700;transform:scaleX(0.9300);transform-origin:0 0;white-space:pre;">15.88</div><div style="position:absolute;left:1051.61px;top:887.26px;font-size:15.99px;line-height:15.99px;color:#fff;font-weight:700;transform:scaleX(0.9300);transform-origin:0 0;white-space:pre;">1674469</div><div style="position:absolute;left:1126.50px;top:887.26px;font-size:15.99px;line-height:15.99px;color:#fff;font-weight:700;transform:scaleX(0.9300);transform-origin:0 0;white-space:pre;">2,797,411.67</div><div style="position:absolute;left:1226.21px;top:887.26px;font-size:15.99px;line-height:15.99px;color:#fff;font-weight:700;transform:scaleX(0.9300);transform-origin:0 0;white-space:pre;">47,206,745.35</div><div style="position:absolute;left:1328.30px;top:887.26px;font-size:15.99px;line-height:15.99px;color:#fff;font-weight:700;transform:scaleX(0.9200);transform-origin:0 0;white-space:pre;">44,409,33...</div><div style="position:absolute;left:649.50px;top:913.76px;font-size:15.99px;line-height:15.99px;color:#fff;font-weight:700;transform:scaleX(0.9450);transform-origin:0 0;white-space:pre;">Total</div><div style="position:absolute;left:775.10px;top:913.76px;font-size:15.99px;line-height:15.99px;color:#fff;font-weight:700;transform:scaleX(0.9300);transform-origin:0 0;white-space:pre;">16.05</div><div style="position:absolute;left:820.36px;top:913.76px;font-size:15.99px;line-height:15.99px;color:#fff;font-weight:700;transform:scaleX(0.9300);transform-origin:0 0;white-space:pre;">0.08</div><div style="position:absolute;left:854.66px;top:913.76px;font-size:15.99px;line-height:15.99px;color:#fff;font-weight:700;transform:scaleX(0.9300);transform-origin:0 0;white-space:pre;">1.75</div><div style="position:absolute;left:892.46px;top:913.76px;font-size:15.99px;line-height:15.99px;color:#fff;font-weight:700;transform:scaleX(0.9300);transform-origin:0 0;white-space:pre;">0.23</div><div style="position:absolute;left:927.80px;top:913.76px;font-size:15.99px;line-height:15.99px;color:#fff;font-weight:700;transform:scaleX(0.9300);transform-origin:0 0;white-space:pre;">15.05</div><div style="position:absolute;left:1043.35px;top:913.76px;font-size:15.99px;line-height:15.99px;color:#fff;font-weight:700;transform:scaleX(0.9300);transform-origin:0 0;white-space:pre;">10655267</div><div style="position:absolute;left:1117.41px;top:913.76px;font-size:15.99px;line-height:15.99px;color:#fff;font-weight:700;transform:scaleX(0.9300);transform-origin:0 0;white-space:pre;">18,597,828.27</div><div style="position:absolute;left:1217.94px;top:913.76px;font-size:15.99px;line-height:15.99px;color:#fff;font-weight:700;transform:scaleX(0.9300);transform-origin:0 0;white-space:pre;">298,501,205.16</div><div style="position:absolute;left:1328.30px;top:913.76px;font-size:15.99px;line-height:15.99px;color:#fff;font-weight:700;transform:scaleX(0.9200);transform-origin:0 0;white-space:pre;">279,903,3...</div></div></div><div style="position:absolute;left:0px;top:200px;width:50px;height:756px;background:#f3f2f1;"></div><div style="position:absolute;left:0px;top:200px;width:3px;height:50px;background:#117865;"></div><div style="position:absolute;left:50px;top:200px;width:1px;height:756px;background:#e1dfdd;"></div><svg style="position:absolute;left:0;top:200px" width="50" height="250" viewBox="0 200 50 250"><path d="M16.6 216V231.6H34.5" fill="none" stroke="#323130" stroke-width="1.3"/><rect x="19.3" y="220.5" width="3.4" height="9.6" fill="#8a8886" stroke="#323130" stroke-width="1.1"/><rect x="24.3" y="223.5" width="3.4" height="6.6" fill="#8a8886" stroke="#323130" stroke-width="1.1"/><rect x="29.3" y="217.5" width="3.4" height="12.6" fill="#8a8886" stroke="#323130" stroke-width="1.1"/><rect x="15.8" y="264.2" width="19.4" height="17.8" fill="none" stroke="#605e5c" stroke-width="1.3"/><path d="M15.8 265.5H35.2" stroke="#605e5c" stroke-width="2.2"/><path d="M15.8 270.5H35.2M15.8 276H35.2M22.3 266V282M28.8 266V282" stroke="#605e5c" stroke-width="1.1"/><rect x="14.5" y="319.5" width="8" height="10" fill="none" stroke="#605e5c" stroke-width="1.2"/><path d="M14.5 324.5H22.5" stroke="#605e5c" stroke-width="1"/><rect x="26.5" y="313.3" width="10" height="9" fill="none" stroke="#605e5c" stroke-width="1.2"/><path d="M26.5 317.8H36.5" stroke="#605e5c" stroke-width="1"/><rect x="26.5" y="325.3" width="10" height="9.3" fill="none" stroke="#605e5c" stroke-width="1.2"/><path d="M26.5 330H36.5" stroke="#605e5c" stroke-width="1"/><path d="M22.5 322H24.5V318H26.5M24.5 322V330H26.5" fill="none" stroke="#605e5c" stroke-width="1.1"/><path d="M18.5 376V364.5H29L33.5 369V377" fill="none" stroke="#605e5c" stroke-width="1.2"/><path d="M29 364.5V369H33.5" fill="none" stroke="#605e5c" stroke-width="1"/><path d="M34 372C36.5 375 36.5 380 34 383" fill="none" stroke="#605e5c" stroke-width="1.1"/><path d="M18.5 426V414.5H29L33.5 419V426" fill="none" stroke="#605e5c" stroke-width="1.2"/><path d="M29 414.5V419H33.5" fill="none" stroke="#605e5c" stroke-width="1"/></svg><div style="position:absolute;left:13.50px;top:376.62px;font-size:8.72px;line-height:8.72px;color:#605e5c;font-weight:700;transform:scaleX(0.9234);transform-origin:0 0;white-space:pre;">DAX</div><div style="position:absolute;left:14.00px;top:426.62px;font-size:8.72px;line-height:8.72px;color:#605e5c;font-weight:700;transform:scaleX(0.9497);transform-origin:0 0;white-space:pre;">TMDL</div><div style="position:absolute;left:1428px;top:200px;width:40px;height:756px;background:#ffffff;"></div><div style="position:absolute;left:1427px;top:200px;width:1px;height:756px;background:#a19f9d;"></div><svg style="position:absolute;left:1439px;top:214px;" width="18" height="18" viewBox="0 0 18 18"><path d="M9 1.5L2 9l7 7.5M16.5 1.5L9.5 9l7 7.5" fill="none" stroke="#252423" stroke-width="1.4"/></svg><svg style="position:absolute;left:1443px;top:250px;" width="17" height="18" viewBox="0 0 17 18"><path d="M15 1.5V17.5L8 11.5H2.5V7H8z" fill="none" stroke="#252423" stroke-width="1.3" stroke-linejoin="round"/></svg><div style="position:absolute;left:1441.6px;top:278px;transform:rotate(90deg);transform-origin:0 0;"><div style="position:absolute;left:0.00px;top:-17.23px;font-size:20.35px;line-height:20.35px;color:#252423;-webkit-text-stroke:0.60px #252423;transform:scaleX(0.9316);transform-origin:0 0;white-space:pre;">Filters</div></div><div style="position:absolute;left:1468px;top:200px;width:226px;height:800px;background:#f3f2f1;"></div><div style="position:absolute;left:1694px;top:200px;width:1px;height:800px;background:#d2d0ce;"></div><div style="position:absolute;left:1695px;top:200px;width:225px;height:800px;background:#f3f2f1;"></div><div style="position:absolute;left:1480.00px;top:214.52px;font-size:20.06px;line-height:20.06px;color:#252423;-webkit-text-stroke:0.60px #252423;transform-origin:0 0;white-space:pre;">Visualizations</div><svg style="position:absolute;left:1667px;top:216px;" width="18" height="18" viewBox="0 0 18 18"><path d="M2 2l7 7-7 7M9 2l7 7-7 7" fill="none" stroke="#252423" stroke-width="1.4"/></svg><div style="position:absolute;left:1479.50px;top:249.51px;font-size:15.70px;line-height:15.70px;color:#252423;-webkit-text-stroke:0.47px #252423;transform:scaleX(0.9698);transform-origin:0 0;white-space:pre;">Build visual</div><div style="position:absolute;left:1479px;top:272px;width:40px;height:40px;background:#d5d4d2;border-radius:3px;"></div><svg style="position:absolute;left:1483px;top:276px;" width="32" height="32" viewBox="0 0 32 32"><path d="M2 2.5h24" stroke="#252423" stroke-width="1.2"/><rect x="2.5" y="6.5" width="27" height="10" fill="#117865" stroke="#252423" stroke-width="1" stroke-dasharray="2 1.3"/><rect x="2.5" y="19.5" width="27" height="10" fill="#117865" stroke="#252423" stroke-width="1" stroke-dasharray="2 1.3"/></svg><svg style="position:absolute;left:1560px;top:270px" width="45" height="45" viewBox="1560 270 45 45"><path d="M1577 306.6H1567.3V277.4H1581L1589.2 285.5V290" fill="none" stroke="#252423" stroke-width="1.2"/><path d="M1581 277.4V285.5H1589.2" fill="none" stroke="#252423" stroke-width="1.1"/><path d="M1597.5 287.5L1585.5 299.5M1596 286.5L1584 298.5" stroke="#252423" stroke-width="1.1"/><path d="M1573 306.5C1577 306.5 1582 305.5 1584.5 302.5C1586.5 300 1585.5 297 1583 297.3C1580.5 297.6 1579.8 300.5 1578.3 302.6C1577.2 304.2 1575.2 305.8 1573 306.5Z" fill="none" stroke="#252423" stroke-width="1.2"/></svg><div style="position:absolute;left:1468px;top:326.5px;width:226px;height:1px;background:#a19f9d;"></div><svg style="position:absolute;left:1487px;top:316px;" width="24" height="12" viewBox="0 0 24 12"><path d="M0 11L11.5 .5 23 11" fill="#f3f2f1" stroke="#a19f9d" stroke-width="1"/></svg><div style="position:absolute;left:1487px;top:327px;width:24px;height:1px;background:#f3f2f1;"></div><svg style="position:absolute;left:1482px;top:341px;" width="24" height="24" viewBox="54.0 46.3 185.2 185.2"><path d="M65 55V225H240" stroke="#323130" stroke-width="10" fill="none"/><rect x="72" y="80" width="38" height="35" fill="#fafafa" stroke="#323130" stroke-width="8"/><rect x="110" y="80" width="70" height="35" fill="#8ec0ee" stroke="#1f6fc7" stroke-width="8"/><rect x="72" y="150" width="63" height="45" fill="#fafafa" stroke="#323130" stroke-width="8"/><rect x="135" y="150" width="85" height="45" fill="#c8c6c4" stroke="#323130" stroke-width="8"/></svg><svg style="position:absolute;left:1517px;top:341px;" width="24" height="24" viewBox="324.1 46.3 185.2 185.2"><path d="M335 55V225H510" stroke="#323130" stroke-width="10" fill="none"/><rect x="365" y="170" width="45" height="52" fill="#fafafa" stroke="#323130" stroke-width="8"/><rect x="365" y="100" width="45" height="70" fill="#8ec0ee" stroke="#1f6fc7" stroke-width="8"/><rect x="445" y="160" width="45" height="62" fill="#fafafa" stroke="#323130" stroke-width="8"/><rect x="445" y="78" width="45" height="82" fill="#c8c6c4" stroke="#323130" stroke-width="8"/></svg><svg style="position:absolute;left:1552px;top:341px;" width="24" height="24" viewBox="594.1 46.3 185.2 185.2"><path d="M605 55V225H780" stroke="#323130" stroke-width="10" fill="none"/><rect x="610" y="62" width="160" height="38" fill="#8ec0ee" stroke="#1f6fc7" stroke-width="8"/><rect x="610" y="100" width="100" height="32" fill="#fafafa" stroke="#323130" stroke-width="8"/><rect x="610" y="132" width="80" height="38" fill="#c8c6c4" stroke="#323130" stroke-width="8"/><rect x="610" y="178" width="120" height="37" fill="#fafafa" stroke="#323130" stroke-width="8"/></svg><svg style="position:absolute;left:1587px;top:341px;" width="24" height="24" viewBox="864.2 46.3 185.2 185.2"><path d="M875 55V225H1050" stroke="#323130" stroke-width="10" fill="none"/><rect x="885" y="62" width="45" height="160" fill="#8ec0ee" stroke="#1f6fc7" stroke-width="8"/><rect x="930" y="130" width="32" height="92" fill="#fafafa" stroke="#323130" stroke-width="8"/><rect x="962" y="150" width="38" height="72" fill="#c8c6c4" stroke="#323130" stroke-width="8"/><rect x="1000" y="102" width="40" height="120" fill="#fafafa" stroke="#323130" stroke-width="8"/></svg><svg style="position:absolute;left:1622px;top:341px;" width="24" height="24" viewBox="1134.3 46.3 185.2 185.2"><path d="M1145 55V225H1320" stroke="#323130" stroke-width="10" fill="none"/><rect x="1152" y="75" width="38" height="40" fill="#fafafa" stroke="#323130" stroke-width="8"/><rect x="1190" y="75" width="110" height="40" fill="#8ec0ee" stroke="#1f6fc7" stroke-width="8"/><rect x="1152" y="150" width="88" height="45" fill="#fafafa" stroke="#323130" stroke-width="8"/><rect x="1240" y="150" width="60" height="45" fill="#c8c6c4" stroke="#323130" stroke-width="8"/></svg><svg style="position:absolute;left:1657px;top:341px;" width="24" height="24" viewBox="1404.3 46.3 185.2 185.2"><path d="M1415 55V225H1590" stroke="#323130" stroke-width="10" fill="none"/><rect x="1445" y="75" width="45" height="110" fill="#8ec0ee" stroke="#1f6fc7" stroke-width="8"/><rect x="1445" y="185" width="45" height="37" fill="#fafafa" stroke="#323130" stroke-width="8"/><rect x="1525" y="78" width="45" height="47" fill="#c8c6c4" stroke="#323130" stroke-width="8"/><rect x="1525" y="125" width="45" height="97" fill="#fafafa" stroke="#323130" stroke-width="8"/></svg><svg style="position:absolute;left:1482px;top:376px;" width="24" height="24" viewBox="54.0 316.4 185.2 185.2"><path d="M65 325V495H240" stroke="#323130" stroke-width="10" fill="none"/><path d="M72 415L150 355L185 410L232 360" stroke="#323130" stroke-width="10" fill="none" stroke-width="9"/><path d="M75 460L160 378L232 420" stroke="#1f6fc7" stroke-width="9" fill="none"/></svg><svg style="position:absolute;left:1517px;top:376px;" width="24" height="24" viewBox="324.1 316.4 185.2 185.2"><path d="M335 450L400 340L460 440" fill="#fafafa" stroke="#323130" stroke-width="9"/><path d="M440 420L470 330L505 410V495H440z" fill="#c8c6c4" stroke="#323130" stroke-width="7"/><path d="M335 440L365 470L430 395L505 495H335z" fill="#8ec0ee" stroke="#1f6fc7" stroke-width="9"/></svg><svg style="position:absolute;left:1552px;top:376px;" width="24" height="24" viewBox="594.1 316.4 185.2 185.2"><path d="M605 325V495H780" stroke="#323130" stroke-width="10" fill="none"/><path d="M610 365L655 410L720 350L775 380V460L720 410L655 460L610 420z" fill="#8ec0ee" stroke="#1f6fc7" stroke-width="8"/></svg><svg style="position:absolute;left:1587px;top:376px;" width="24" height="24" viewBox="864.2 316.4 185.2 185.2"><path d="M875 325V495H1050V345H880" stroke="#323130" stroke-width="10" fill="none"/><path d="M880 345H1045V460L990 415L930 470L880 415z" fill="#8ec0ee" stroke="#1f6fc7" stroke-width="8"/></svg><svg style="position:absolute;left:1622px;top:376px;" width="24" height="24" viewBox="1134.3 316.4 185.2 185.2"><path d="M1145 325V495H1320" stroke="#323130" stroke-width="10" fill="none"/><rect x="1175" y="345" width="40" height="115" fill="#8ec0ee" stroke="#1f6fc7" stroke-width="8"/><rect x="1175" y="460" width="40" height="32" fill="#fafafa" stroke="#323130" stroke-width="8"/><rect x="1258" y="345" width="42" height="45" fill="#c8c6c4" stroke="#323130" stroke-width="8"/><rect x="1258" y="390" width="42" height="102" fill="#fafafa" stroke="#323130" stroke-width="8"/><path d="M1150 480L1215 410L1255 460L1315 395" stroke="#323130" stroke-width="10" fill="none" stroke-width="9"/></svg><svg style="position:absolute;left:1657px;top:376px;" width="24" height="24" viewBox="1404.3 316.4 185.2 185.2"><path d="M1415 325V495H1590" stroke="#323130" stroke-width="10" fill="none"/><rect x="1445" y="400" width="45" height="92" fill="#8ec0ee" stroke="#1f6fc7" stroke-width="8"/><rect x="1490" y="335" width="35" height="157" fill="#fafafa" stroke="#323130" stroke-width="8"/><rect x="1530" y="375" width="40" height="117" fill="#c8c6c4" stroke="#323130" stroke-width="8"/><path d="M1420 480L1480 410L1525 450L1585 395" stroke="#323130" stroke-width="10" fill="none" stroke-width="9"/></svg><svg style="position:absolute;left:1482px;top:411px;" width="24" height="24" viewBox="54.0 586.4 185.2 185.2"><path d="M65 595V765H240" stroke="#323130" stroke-width="10" fill="none"/><path d="M85 640C130 640 130 670 150 670S180 620 230 615V650C180 660 180 690 150 690S120 665 85 665z" fill="#c8c6c4" stroke="#777" stroke-width="7"/><path d="M85 690C120 680 130 720 150 720S190 690 230 700V735H85z" fill="#d9822b"/><path d="M85 665C125 665 130 710 150 710S185 670 230 665V700C190 700 180 735 150 735S110 695 85 700z" fill="#8ec0ee" stroke="#1f6fc7" stroke-width="8"/></svg><svg style="position:absolute;left:1517px;top:411px;" width="24" height="24" viewBox="324.1 586.4 185.2 185.2"><path d="M335 595V765H510" stroke="#323130" stroke-width="10" fill="none"/><rect x="362" y="650" width="38" height="112" fill="#fafafa" stroke="#323130" stroke-width="8"/><rect x="400" y="650" width="40" height="50" fill="#8a8886" stroke="#323130" stroke-width="8"/><rect x="430" y="605" width="20" height="95" fill="#1f6fc7" stroke="#1f6fc7" stroke-width="4"/><rect x="462" y="605" width="38" height="157" fill="#fafafa" stroke="#323130" stroke-width="8"/></svg><svg style="position:absolute;left:1552px;top:411px;" width="24" height="24" viewBox="594.1 586.4 185.2 185.2"><rect x="605" y="608" width="170" height="47" fill="#8ec0ee" stroke="#1f6fc7" stroke-width="8"/><rect x="628" y="655" width="122" height="57" fill="#8ec0ee" stroke="#1f6fc7" stroke-width="8"/><rect x="655" y="712" width="65" height="46" fill="#8ec0ee" stroke="#1f6fc7" stroke-width="8"/></svg><svg style="position:absolute;left:1587px;top:411px;" width="24" height="24" viewBox="864.2 586.4 185.2 185.2"><path d="M875 595V765H1050" stroke="#323130" stroke-width="10" fill="none"/><rect x="1000" y="605" width="30" height="30" fill="#323130"/><rect x="905" y="635" width="28" height="25" fill="#8ec0ee"/><rect x="953" y="665" width="28" height="25" fill="#8ec0ee"/><rect x="905" y="710" width="28" height="28" fill="#323130"/><rect x="1000" y="703" width="28" height="25" fill="#8ec0ee"/></svg><svg style="position:absolute;left:1622px;top:411px;" width="24" height="24" viewBox="1134.3 586.4 185.2 185.2"><circle cx="1230" cy="682" r="82" fill="#fafafa" stroke="#323130" stroke-width="9"/><path d="M1230 600A82 82 0 0 1 1285 743L1230 682z" fill="#8ec0ee" stroke="#1f6fc7" stroke-width="8"/></svg><svg style="position:absolute;left:1657px;top:411px;" width="24" height="24" viewBox="1404.3 586.4 185.2 185.2"><circle cx="1500" cy="682" r="62" fill="none" stroke="#8ec0ee" stroke-width="42"/><path d="M1438 682A62 62 0 0 1 1500 620" fill="none" stroke="#fafafa" stroke-width="40"/><circle cx="1500" cy="682" r="84" fill="none" stroke="#1f6fc7" stroke-width="6"/><circle cx="1500" cy="682" r="40" fill="none" stroke="#1f6fc7" stroke-width="6"/></svg><svg style="position:absolute;left:1482px;top:446px;" width="24" height="24" viewBox="54.0 856.5 185.2 185.2"><rect x="65" y="868" width="173" height="170" fill="#fafafa" stroke="#323130" stroke-width="9"/><rect x="65" y="868" width="80" height="87" fill="#8ec0ee" stroke="#1f6fc7" stroke-width="8"/><rect x="65" y="955" width="80" height="83" fill="#8ec0ee" stroke="#1f6fc7" stroke-width="8"/><path d="M145 912H238M145 955H238M185 955V1038M145 995H238" stroke="#323130" stroke-width="7"/></svg><svg style="position:absolute;left:1517px;top:446px;" width="24" height="24" viewBox="324.1 856.5 185.2 185.2"><circle cx="425" cy="945" r="62" fill="#fafafa" stroke="#323130" stroke-width="8"/><path d="M395 910c20-10 35 5 25 20s15 25 0 35M440 900c15 5 25 20 20 35M450 975c10 5 20 0 25-10" stroke="#2a9d3b" stroke-width="16" fill="none"/><path d="M385 880A75 75 0 0 0 480 1000M425 1008V1030M365 1035H490" stroke="#323130" stroke-width="10" fill="none"/></svg><svg style="position:absolute;left:1552px;top:446px;" width="24" height="24" viewBox="594.1 856.5 185.2 185.2"><path d="M605 878L660 885L690 905L730 880L775 878V1000L730 1025L690 1010L640 1020L605 995z" fill="#c8c6c4" stroke="#323130" stroke-width="8"/><path d="M605 878L660 885L690 905L680 945L630 950L605 940z" fill="#8ec0ee" stroke="#1f6fc7" stroke-width="7"/><path d="M690 945L775 935V1000L730 1025L690 1010z" fill="#8ec0ee" stroke="#1f6fc7" stroke-width="7"/></svg><svg style="position:absolute;left:1587px;top:446px;" width="24" height="24" viewBox="864.2 856.5 185.2 185.2"><path d="M875 878L930 885L960 905L1000 880L1045 878V1000L1000 1025L960 1010L910 1020L875 995z" fill="#fafafa" stroke="#323130" stroke-width="8"/><path d="M875 945H935L960 905M935 945L960 975L955 1020M960 975L1045 960" fill="none" stroke="#1f6fc7" stroke-width="7"/></svg><svg style="position:absolute;left:1622px;top:446px;" width="24" height="24" viewBox="1134.3 856.5 185.2 185.2"><path d="M1262 858L1160 1022L1238 992L1302 1042z" fill="#4a90d8" stroke="#2f6fb8" stroke-width="5" stroke-linejoin="round"/></svg><svg style="position:absolute;left:1657px;top:446px;" width="24" height="24" viewBox="1404.3 856.5 185.2 185.2"><path d="M1420 990A82 82 0 0 1 1502 908" fill="none" stroke="#323130" stroke-width="14"/><path d="M1502 908A82 82 0 0 1 1584 990" fill="none" stroke="#8ec0ee" stroke-width="24"/><path d="M1460 990A42 42 0 0 1 1544 990" fill="none" stroke="#1f6fc7" stroke-width="6"/><path d="M1500 985L1540 945" stroke="#323130" stroke-width="14"/></svg><svg style="position:absolute;left:1482px;top:481px;" width="24" height="24" viewBox="54.0 46.3 185.2 185.2"><rect x="65" y="75" width="170" height="135" fill="#fafafa" stroke="#323130" stroke-width="10"/><text x="95" y="170" font-size="78" fill="#3b8fe0" font-family="Liberation Sans">123</text><path d="M90 185H215" stroke="#a19f9d" stroke-width="8"/><path d="M90 45L55 115H95L70 160L135 95H100L125 45z" fill="#e8a030" stroke="#b86b00" stroke-width="4"/></svg><svg style="position:absolute;left:1517px;top:481px;" width="24" height="24" viewBox="324.1 46.3 185.2 185.2"><rect x="335" y="75" width="170" height="135" fill="#fafafa" stroke="#323130" stroke-width="10"/><text x="357" y="168" font-size="82" fill="#3b8fe0" font-family="Liberation Sans">123</text><path d="M360 185H485" stroke="#a19f9d" stroke-width="8"/></svg><svg style="position:absolute;left:1552px;top:481px;" width="24" height="24" viewBox="594.1 46.3 185.2 185.2"><rect x="605" y="58" width="170" height="167" fill="#fafafa" stroke="#323130" stroke-width="10"/><path d="M637 90V195" stroke="#8a8886" stroke-width="7"/><path d="M652 103H745M652 160H745" stroke="#1f6fc7" stroke-width="14"/><path d="M652 128H695M652 185H695" stroke="#a19f9d" stroke-width="7"/></svg><svg style="position:absolute;left:1587px;top:481px;" width="24" height="24" viewBox="864.2 46.3 185.2 185.2"><rect x="875" y="65" width="170" height="145" fill="#fafafa" stroke="#323130" stroke-width="10"/><path d="M898 150L927 102L955 150z" fill="#fafafa" stroke="#2a9d3b" stroke-width="10"/><path d="M980 98H1025L1002 145z" fill="#d13438"/><path d="M895 178H1025" stroke="#a19f9d" stroke-width="8"/></svg><svg style="position:absolute;left:1622px;top:481px;" width="24" height="24" viewBox="1134.3 46.3 185.2 185.2"><rect x="1145" y="58" width="170" height="167" fill="#fafafa" stroke="#323130" stroke-width="10"/><path d="M1145 72H1315" stroke="#a19f9d" stroke-width="14"/><rect x="1175" y="118" width="30" height="28" fill="#c8c6c4" stroke="#8a8886" stroke-width="5"/><rect x="1175" y="168" width="30" height="28" fill="#c8c6c4" stroke="#8a8886" stroke-width="5"/><path d="M1230 142H1325L1292 190V235H1262V190z" fill="#fafafa" stroke="#323130" stroke-width="10"/></svg><svg style="position:absolute;left:1657px;top:481px;" width="24" height="24" viewBox="1404.3 46.3 185.2 185.2"><rect x="1415" y="58" width="170" height="167" fill="#fafafa" stroke="#323130" stroke-width="10"/><path d="M1415 72H1585" stroke="#a19f9d" stroke-width="14"/><path d="M1415 118H1585M1415 162H1585M1475 85V225M1530 85V225" stroke="#c8c6c4" stroke-width="7"/></svg><svg style="position:absolute;left:1482px;top:516px;" width="24" height="24" viewBox="54.0 316.4 185.2 185.2"><rect x="65" y="328" width="173" height="167" fill="#fafafa" stroke="#323130" stroke-width="10"/><path d="M65 342H238" stroke="#a19f9d" stroke-width="14"/><rect x="178" y="360" width="58" height="133" fill="#8ec0ee"/><rect x="67" y="445" width="170" height="48" fill="#8ec0ee"/><path d="M67 400H236M67 445H236M125 355V493M178 355V493" stroke="#fafafa" stroke-width="6"/><path d="M67 445H236M178 360V493" stroke="#1f6fc7" stroke-width="4"/></svg><svg style="position:absolute;left:1517px;top:516px;" width="24" height="24" viewBox="324.1 316.4 185.2 185.2"><text x="362" y="470" font-size="150" font-weight="700" fill="#1e6fc4" font-family="Liberation Sans">R</text></svg><svg style="position:absolute;left:1552px;top:516px;" width="24" height="24" viewBox="594.1 316.4 185.2 185.2"><text x="598" y="455" font-size="150" font-weight="700" fill="#1e6fc4" font-family="Liberation Sans" transform="translate(598 0) scale(.92 1) translate(-598 0)">Py</text></svg><svg style="position:absolute;left:1587px;top:516px;" width="24" height="24" viewBox="864.2 316.4 185.2 185.2"><path d="M875 325V495H1045" stroke="#323130" stroke-width="10" fill="none"/><path d="M880 358H1000" stroke="#1f6fc7" stroke-width="8"/><circle cx="1015" cy="358" r="18" fill="#8ec0ee" stroke="#1f6fc7" stroke-width="7"/><path d="M880 405H960" stroke="#323130" stroke-width="8"/><circle cx="972" cy="405" r="13" fill="#a19f9d" stroke="#323130" stroke-width="6"/><path d="M880 445H925" stroke="#323130" stroke-width="8"/><circle cx="937" cy="445" r="13" fill="#a19f9d" stroke="#323130" stroke-width="6"/></svg><svg style="position:absolute;left:1622px;top:516px;" width="24" height="24" viewBox="1134.3 316.4 185.2 185.2"><rect x="1145" y="385" width="65" height="43" fill="#8ec0ee" stroke="#1f6fc7" stroke-width="8"/><rect x="1260" y="328" width="55" height="47" fill="#8ec0ee" stroke="#1f6fc7" stroke-width="8"/><rect x="1260" y="385" width="55" height="45" fill="#8ec0ee" stroke="#1f6fc7" stroke-width="8"/><rect x="1260" y="440" width="55" height="48" fill="#8ec0ee" stroke="#1f6fc7" stroke-width="8"/><path d="M1210 406H1235M1235 350V465M1235 350H1260M1235 406H1260M1235 465H1260" stroke="#323130" stroke-width="8" fill="none"/></svg><svg style="position:absolute;left:1657px;top:516px;" width="24" height="24" viewBox="1404.3 316.4 185.2 185.2"><path d="M1418 338H1585V440H1480L1445 490V440H1418z" fill="none" stroke="#1f6fc7" stroke-width="10" stroke-linejoin="round"/></svg><svg style="position:absolute;left:1482px;top:551px;" width="24" height="24" viewBox="54.0 586.4 185.2 185.2"><path d="M82 598H170L215 645V765H82V700" fill="#fafafa" stroke="#323130" stroke-width="10"/><path d="M82 640V598M170 598V645H215" fill="none" stroke="#323130" stroke-width="8"/><circle cx="92" cy="662" r="16" fill="#8ec0ee" stroke="#1f6fc7" stroke-width="7"/><path d="M135 678H190M115 705H165" stroke="#1f6fc7" stroke-width="8"/></svg><svg style="position:absolute;left:1517px;top:551px;" width="24" height="24" viewBox="324.1 586.4 185.2 185.2"><path d="M370 600H470V680C470 710 450 725 420 725S370 710 370 680z" fill="#fafafa" stroke="#323130" stroke-width="10"/><path d="M370 620H335V645C335 670 355 690 375 690M470 620H505V645C505 670 485 690 465 690M420 725V745" fill="none" stroke="#323130" stroke-width="10"/><rect x="370" y="598" width="100" height="22" fill="#1f6fc7"/><path d="M372 765H470V748H390z" fill="#1f6fc7" stroke="#1f6fc7" stroke-width="8"/></svg><svg style="position:absolute;left:1552px;top:551px;" width="24" height="24" viewBox="594.1 586.4 185.2 185.2"><path d="M620 590H710L755 640V772H620z" fill="#fafafa" stroke="#323130" stroke-width="10"/><path d="M710 590V640H755" fill="none" stroke="#323130" stroke-width="8"/><rect x="640" y="695" width="20" height="55" fill="#323130"/><rect x="678" y="720" width="20" height="30" fill="#323130"/><rect x="715" y="670" width="20" height="80" fill="#323130"/></svg><svg style="position:absolute;left:1587px;top:551px;" width="24" height="24" viewBox="864.2 586.4 185.2 185.2"><rect x="965" y="598" width="70" height="57" fill="#fafafa" stroke="#a19f9d" stroke-width="7"/><rect x="875" y="690" width="70" height="70" fill="#fafafa" stroke="#a19f9d" stroke-width="7"/><path d="M945 640V690M965 690H1000" stroke="#1f6fc7" stroke-width="8"/><path d="M960 685H1055L1025 730V775H995V730z" fill="#fafafa" stroke="#323130" stroke-width="10"/><path d="M905 590L865 665H905L880 700L945 630H905L945 590z" fill="#e8a030" stroke="#b86b00" stroke-width="4"/></svg><svg style="position:absolute;left:1622px;top:551px;" width="24" height="24" viewBox="1134.3 586.4 185.2 185.2"><path d="M1205 598H1315V690M1145 700V765H1235" fill="none" stroke="#323130" stroke-width="9"/><path d="M1195 735L1222 645L1250 735" fill="none" stroke="#3b8fe0" stroke-width="7"/><path d="M1232 685H1327L1297 730V775H1267V730z" fill="#fafafa" stroke="#323130" stroke-width="10"/><path d="M1175 590L1135 665H1175L1150 700L1215 630H1175L1215 590z" fill="#e8a030" stroke="#b86b00" stroke-width="4"/></svg><svg style="position:absolute;left:1657px;top:551px;" width="24" height="24" viewBox="1404.3 586.4 185.2 185.2"><path d="M1475 598H1585V690M1415 700V765H1505" fill="none" stroke="#323130" stroke-width="9"/><path d="M1490 648H1560M1450 705H1480" stroke="#a19f9d" stroke-width="7"/><rect x="1445" y="697" width="18" height="18" fill="none" stroke="#a19f9d" stroke-width="5"/><path d="M1502 685H1597L1567 730V775H1537V730z" fill="#fafafa" stroke="#323130" stroke-width="10"/><path d="M1445 590L1405 665H1445L1420 700L1485 630H1445L1485 590z" fill="#e8a030" stroke="#b86b00" stroke-width="4"/></svg><svg style="position:absolute;left:1482px;top:585px;" width="24" height="24" viewBox="54.0 848.8 185.2 185.2"><rect x="65" y="885" width="173" height="135" fill="#fafafa" stroke="#323130" stroke-width="10"/><path d="M70 990L120 930L180 985L205 955L235 985V1015H70z" fill="#8ec0ee" stroke="#1f6fc7" stroke-width="7"/><circle cx="195" cy="915" r="10" fill="#e8a030"/></svg><svg style="position:absolute;left:1517px;top:585px;" width="24" height="24" viewBox="324.1 848.8 185.2 185.2"><path d="M335 880H505V1035H335z" fill="#8ec0ee" stroke="#1f6fc7" stroke-width="9"/><path d="M365 1000L400 950L420 980L455 910L505 905V880H335V1000z" fill="#fafafa" opacity=".9"/><path d="M340 865H385V930L362 960L340 930z" fill="#d9822b"/><circle cx="485" cy="1010" r="22" fill="#d9822b"/><circle cx="500" cy="965" r="12" fill="#d9822b"/></svg><svg style="position:absolute;left:1552px;top:585px;" width="24" height="24" viewBox="594.1 848.8 185.2 185.2"><path d="M690 885L655 870L605 945L655 1025L690 1010" fill="none" stroke="#9b33b5" stroke-width="10" stroke-linejoin="round"/><path d="M705 870L775 945L705 1025L670 985L705 945L670 905z" fill="none" stroke="#9b33b5" stroke-width="10" stroke-linejoin="round"/><path d="M740 907L705 945L740 985" fill="none" stroke="#9b33b5" stroke-width="9"/></svg><svg style="position:absolute;left:1587px;top:585px;" width="24" height="24" viewBox="864.2 848.8 185.2 185.2"><path d="M878 878H990L1045 942L990 1018H878L932 942z" fill="none" stroke="#1d7fe0" stroke-width="10" stroke-linejoin="round"/><path d="M988 880L880 1016M1020 908L938 1018" stroke="#1d7fe0" stroke-width="9"/></svg><svg style="position:absolute;left:1622px;top:585px;" width="24" height="24" viewBox="1134.3 848.8 185.2 185.2"><circle cx="1165" cy="933" r="9" fill="#323130"/><circle cx="1225" cy="933" r="9" fill="#323130"/><circle cx="1285" cy="933" r="9" fill="#323130"/></svg><div style="position:absolute;left:1468px;top:621px;width:226px;height:1px;background:#e1dfdd;"></div><div style="position:absolute;left:1484.00px;top:635.69px;font-size:14.54px;line-height:14.54px;color:#252423;transform:scaleX(0.9687);transform-origin:0 0;white-space:pre;">Values</div><div style="position:absolute;left:1474px;top:659.5px;width:212px;height:34px;background:#fff;border:1px dashed #c8c6c4;box-sizing:border-box;"></div><div style="position:absolute;left:1487.50px;top:669.69px;font-size:14.54px;line-height:14.54px;color:#252423;transform:scaleX(1.0287);transform-origin:0 0;white-space:pre;">Add data fields here</div><div style="position:absolute;left:1484.00px;top:710.32px;font-size:14.97px;line-height:14.97px;color:#252423;-webkit-text-stroke:0.45px #252423;transform:scaleX(1.0779);transform-origin:0 0;white-space:pre;">Drill through</div><div style="position:absolute;left:1484.00px;top:741.39px;font-size:14.54px;line-height:14.54px;color:#252423;transform:scaleX(1.0276);transform-origin:0 0;white-space:pre;">Cross-report</div><div style="position:absolute;left:1627px;top:739px;width:40px;height:20px;background:#fff;border:1px solid #605e5c;border-radius:10px;box-sizing:border-box;"></div><div style="position:absolute;left:1632px;top:744px;width:10px;height:10px;background:#605e5c;border-radius:50%;"></div><div style="position:absolute;left:1645.00px;top:744.39px;font-size:10.17px;line-height:10.17px;color:#605e5c;transform:scaleX(1.0440);transform-origin:0 0;white-space:pre;">Off</div><div style="position:absolute;left:1484.00px;top:775.29px;font-size:14.54px;line-height:14.54px;color:#252423;transform:scaleX(1.0187);transform-origin:0 0;white-space:pre;">Keep all filters</div><div style="position:absolute;left:1627px;top:773px;width:40px;height:20px;background:#117865;border-radius:10px;"></div><div style="position:absolute;left:1651px;top:778px;width:10px;height:10px;background:#fff;border-radius:50%;"></div><div style="position:absolute;left:1632.00px;top:778.39px;font-size:10.17px;line-height:10.17px;color:#fff;transform:scaleX(0.9578);transform-origin:0 0;white-space:pre;">On</div><div style="position:absolute;left:1474px;top:807px;width:212px;height:30.5px;background:#fff;border:1px dashed #c8c6c4;box-sizing:border-box;"></div><div style="position:absolute;left:1485.00px;top:815.39px;font-size:14.54px;line-height:14.54px;color:#252423;transform:scaleX(1.0577);transform-origin:0 0;white-space:pre;">Add drill-through fields here</div><div style="position:absolute;left:1706.00px;top:215.60px;font-size:18.90px;line-height:18.90px;color:#252423;-webkit-text-stroke:0.57px #252423;transform:scaleX(1.0269);transform-origin:0 0;white-space:pre;">Data</div><svg style="position:absolute;left:1893px;top:216px;" width="18" height="18" viewBox="0 0 18 18"><path d="M2 2l7 7-7 7M9 2l7 7-7 7" fill="none" stroke="#252423" stroke-width="1.4"/></svg><div style="position:absolute;left:1701px;top:257.5px;width:214px;height:29.5px;background:#fff;border:1px solid #c8c6c4;border-bottom:1px solid #605e5c;border-radius:4px;box-sizing:border-box;"></div><svg style="position:absolute;left:1713px;top:262px;" width="22" height="21" viewBox="0 0 22 21"><circle cx="9" cy="9" r="7.5" fill="none" stroke="#323130" stroke-width="1.3"/><path d="M14.5 14.5l5 5" stroke="#323130" stroke-width="1.4"/></svg><div style="position:absolute;left:1742.50px;top:266.96px;font-size:15.99px;line-height:15.99px;color:#605e5c;transform:scaleX(1.0069);transform-origin:0 0;white-space:pre;">Search</div><svg style="position:absolute;left:1713px;top:305.1px;" width="11" height="16" viewBox="0 0 11 16"><path d="M2 1.5l6.5 6.5L2 14.5" fill="none" stroke="#323130" stroke-width="1.2"/></svg><div style="position:absolute;left:1754.50px;top:305.92px;font-size:14.97px;line-height:14.97px;color:#252423;transform:scaleX(0.9613);transform-origin:0 0;white-space:pre;">Measure</div><svg style="position:absolute;left:1713px;top:334.7px;" width="11" height="16" viewBox="0 0 11 16"><path d="M2 1.5l6.5 6.5L2 14.5" fill="none" stroke="#323130" stroke-width="1.2"/></svg><div style="position:absolute;left:1754.50px;top:335.52px;font-size:14.97px;line-height:14.97px;color:#252423;transform:scaleX(0.9888);transform-origin:0 0;white-space:pre;">marketing</div><svg style="position:absolute;left:1730px;top:304px;" width="19" height="20" viewBox="0 0 19 20"><rect x="1" y="1" width="13" height="16" rx="2.5" fill="none" stroke="#323130" stroke-width="1.3"/><rect x="4" y="4" width="7" height="3" fill="none" stroke="#323130" stroke-width="1"/><circle cx="5" cy="10" r=".9" fill="#323130"/><circle cx="10" cy="10" r=".9" fill="#323130"/><circle cx="5" cy="13.5" r=".9" fill="#323130"/><circle cx="10" cy="13.5" r=".9" fill="#323130"/><path d="M16 4v13.5c0 1-.8 1.5-1.5 1.5H4" fill="none" stroke="#323130" stroke-width="1.1"/></svg><svg style="position:absolute;left:1731px;top:335px;" width="17" height="17" viewBox="0 0 17 17"><rect x="1" y="1" width="15" height="15" rx="2.5" fill="none" stroke="#323130" stroke-width="1.3"/><path d="M1 6h15M1 11h15M6 1v15M11 1v15" stroke="#323130" stroke-width="1.1"/></svg><div style="position:absolute;left:0px;top:0px;width:1920px;height:43px;background:#3b3a39;"></div><div style="position:absolute;left:809px;top:0px;width:59px;height:2px;background:#3a96dd;"></div><div style="position:absolute;left:868px;top:0px;width:242px;height:2px;background:#f5f5f5;"></div><svg style="position:absolute;left:20px;top:11px;" width="22" height="22" viewBox="0 0 22 22"><path d="M1.5 1.5h17l1.5 1.5v17h-15l-3.5-3.5z" fill="none" stroke="#e6e6e6" stroke-width="1.3"/><path d="M5.5 1.5v6h10v-6M5.5 20v-6.5h10V20" fill="none" stroke="#e6e6e6" stroke-width="1.3"/></svg><svg style="position:absolute;left:58px;top:11px;" width="20" height="22" viewBox="0 0 20 22"><path d="M2 2v6h6" fill="none" stroke="#e6e6e6" stroke-width="1.3"/><path d="M2.5 7.5C5 3.5 9 2 12.5 3.2 16.5 4.6 17.5 9.5 15 12.5L7 20.5" fill="none" stroke="#e6e6e6" stroke-width="1.3"/></svg><svg style="position:absolute;left:95px;top:11px;" width="20" height="22" viewBox="0 0 20 22"><path d="M18 2v6h-6" fill="none" stroke="#8a8886" stroke-width="1.3"/><path d="M17.5 7.5C15 3.5 11 2 7.5 3.2 3.5 4.6 2.5 9.5 5 12.5L13 20.5" fill="none" stroke="#8a8886" stroke-width="1.3"/></svg><div style="position:absolute;left:126.00px;top:16.96px;font-size:15.41px;line-height:15.41px;color:#fff;transform:scaleX(0.9613);transform-origin:0 0;white-space:pre;">khaled 1</div><div style="position:absolute;left:189px;top:23.2px;width:3.6px;height:3.6px;background:#fff;border-radius:50%;"></div><div style="position:absolute;left:199.00px;top:16.96px;font-size:15.41px;line-height:15.41px;color:#fff;transform:scaleX(0.9275);transform-origin:0 0;white-space:pre;">Last saved: Today at 5:45 PM</div><svg style="position:absolute;left:395px;top:18px;" width="12" height="8" viewBox="0 0 12 8"><path d="M0 0h11l-5.5 6z" fill="#fff"/></svg><div style="position:absolute;left:798px;top:6px;width:500px;height:30px;background:#d6d6d6;border-radius:3px;"></div><svg style="position:absolute;left:818px;top:11px;" width="22" height="20" viewBox="0 0 22 20"><circle cx="13" cy="7.5" r="6.2" fill="none" stroke="#323130" stroke-width="1.4"/><path d="M8.5 12L1.5 19" stroke="#323130" stroke-width="1.5"/></svg><div style="position:absolute;left:854.00px;top:13.85px;font-size:16.72px;line-height:16.72px;color:#117865;transform:scaleX(0.9631);transform-origin:0 0;white-space:pre;">Search</div><div style="position:absolute;left:1653.00px;top:14.46px;font-size:15.99px;line-height:15.99px;color:#fff;transform:scaleX(0.9408);transform-origin:0 0;white-space:pre;">Sign in</div><svg style="position:absolute;left:1710px;top:9px;" width="26" height="26" viewBox="0 0 26 26"><circle cx="13" cy="13" r="12.5" fill="#fff"/><circle cx="13" cy="9.5" r="3.8" fill="none" stroke="#3b3a39" stroke-width="1.6"/><path d="M6.5 16h13c0 3.5-3 6-6.5 6s-6.5-2.5-6.5-6z" fill="none" stroke="#3b3a39" stroke-width="1.6"/></svg><div style="position:absolute;left:1773px;top:22px;width:20px;height:1.3px;background:#fff;"></div><svg style="position:absolute;left:1829px;top:15px;" width="16" height="16" viewBox="0 0 16 16"><rect x="1" y="4" width="10" height="10" rx="1.5" fill="none" stroke="#fff" stroke-width="1.2"/><path d="M4 4V2.5C4 1.7 4.7 1 5.5 1h7C13.3 1 14 1.7 14 2.5v7c0 .8-.7 1.5-1.5 1.5H11" fill="none" stroke="#fff" stroke-width="1.2"/></svg><svg style="position:absolute;left:1884px;top:14px;" width="18" height="18" viewBox="0 0 18 18"><path d="M1 1l16 16M17 1L1 17" stroke="#fff" stroke-width="1.4"/></svg><div style="position:absolute;left:0px;top:43px;width:1920px;height:157px;background:#fafafa;"></div><div style="position:absolute;left:28.00px;top:54.72px;font-size:16.86px;line-height:16.86px;color:#252423;transform:scaleX(0.9572);transform-origin:0 0;white-space:pre;">File</div><div style="position:absolute;left:102.00px;top:54.72px;font-size:16.86px;line-height:16.86px;color:#252423;transform:scaleX(1.0226);transform-origin:0 0;white-space:pre;">Home</div><div style="position:absolute;left:187.00px;top:54.72px;font-size:16.86px;line-height:16.86px;color:#252423;-webkit-text-stroke:0.51px #252423;transform:scaleX(1.0671);transform-origin:0 0;white-space:pre;">Insert</div><div style="position:absolute;left:271.00px;top:54.72px;font-size:16.86px;line-height:16.86px;color:#252423;transform:scaleX(1.0669);transform-origin:0 0;white-space:pre;">Modeling</div><div style="position:absolute;left:384.00px;top:54.72px;font-size:16.86px;line-height:16.86px;color:#252423;transform:scaleX(1.0197);transform-origin:0 0;white-space:pre;">View</div><div style="position:absolute;left:460.00px;top:54.72px;font-size:16.86px;line-height:16.86px;color:#252423;transform:scaleX(1.0524);transform-origin:0 0;white-space:pre;">Optimize</div><div style="position:absolute;left:569.00px;top:54.72px;font-size:16.86px;line-height:16.86px;color:#252423;transform:scaleX(1.0380);transform-origin:0 0;white-space:pre;">Help</div><div style="position:absolute;left:187px;top:78px;width:45px;height:3px;background:#117865;"></div><div style="position:absolute;left:1808px;top:48px;width:105px;height:30px;background:#117865;border-radius:3px;"></div><svg style="position:absolute;left:1816px;top:53px;" width="22" height="20" viewBox="0 0 22 20"><path d="M10 5H3.5C2.7 5 2 5.7 2 6.5v10C2 17.3 2.7 18 3.5 18h12c.8 0 1.5-.7 1.5-1.5V14" fill="none" stroke="#fff" stroke-width="1.4"/><path d="M7 13c1-5 5-7.5 10-7.5V9l4.5-5L17 0v3.2C11 3.5 7.5 7 7 13z" fill="none" stroke="#fff" stroke-width="1.3"/></svg><div style="position:absolute;left:1846.00px;top:54.71px;font-size:15.70px;line-height:15.70px;color:#fff;transform:scaleX(0.9073);transform-origin:0 0;white-space:pre;">Share</div><svg style="position:absolute;left:1888px;top:58px;" width="12" height="8" viewBox="0 0 12 8"><path d="M1 1l5 5 5-5" fill="none" stroke="#fff" stroke-width="1.5"/></svg><div style="position:absolute;left:73px;top:88px;width:1px;height:110px;background:#d2d0ce;"></div><div style="position:absolute;left:206px;top:88px;width:1px;height:110px;background:#d2d0ce;"></div><div style="position:absolute;left:474px;top:88px;width:1px;height:110px;background:#d2d0ce;"></div><div style="position:absolute;left:685px;top:88px;width:1px;height:110px;background:#d2d0ce;"></div><div style="position:absolute;left:913px;top:88px;width:1px;height:110px;background:#d2d0ce;"></div><div style="position:absolute;left:998px;top:88px;width:1px;height:110px;background:#d2d0ce;"></div><div style="position:absolute;left:0px;top:200px;width:1920px;height:4px;background:linear-gradient(rgba(0,0,0,0.10),rgba(0,0,0,0));"></div><div style="position:absolute;left:21.50px;top:139.57px;font-size:14.68px;line-height:14.68px;color:#252423;transform:scaleX(0.9862);transform-origin:0 0;white-space:pre;">New</div><div style="position:absolute;left:13.00px;top:158.57px;font-size:14.68px;line-height:14.68px;color:#252423;transform:scaleX(0.9797);transform-origin:0 0;white-space:pre;">page</div><div style="position:absolute;left:94.50px;top:139.57px;font-size:14.68px;line-height:14.68px;color:#252423;transform:scaleX(0.9862);transform-origin:0 0;white-space:pre;">New</div><div style="position:absolute;left:91.00px;top:158.57px;font-size:14.68px;line-height:14.68px;color:#252423;transform:scaleX(0.9590);transform-origin:0 0;white-space:pre;">visual</div><div style="position:absolute;left:148.00px;top:139.57px;font-size:14.68px;line-height:14.68px;color:#252423;transform:scaleX(1.0167);transform-origin:0 0;white-space:pre;">More</div><div style="position:absolute;left:136.00px;top:158.57px;font-size:14.68px;line-height:14.68px;color:#252423;transform:scaleX(0.9581);transform-origin:0 0;white-space:pre;">visuals</div><div style="position:absolute;left:245.00px;top:139.57px;font-size:14.68px;line-height:14.68px;color:#252423;transform:scaleX(0.8698);transform-origin:0 0;white-space:pre;">Key</div><div style="position:absolute;left:220.50px;top:158.57px;font-size:14.68px;line-height:14.68px;color:#252423;transform-origin:0 0;white-space:pre;">influencers</div><div style="position:absolute;left:296.00px;top:139.57px;font-size:14.68px;line-height:14.68px;color:#252423;transform:scaleX(1.0299);transform-origin:0 0;white-space:pre;">Decomposition</div><div style="position:absolute;left:333.50px;top:158.57px;font-size:14.68px;line-height:14.68px;color:#252423;transform:scaleX(0.9884);transform-origin:0 0;white-space:pre;">tree</div><div style="position:absolute;left:401.00px;top:139.57px;font-size:14.68px;line-height:14.68px;color:#252423;transform:scaleX(1.0074);transform-origin:0 0;white-space:pre;">Narrative</div><div style="position:absolute;left:487.50px;top:139.57px;font-size:14.68px;line-height:14.68px;color:#252423;transform:scaleX(0.9830);transform-origin:0 0;white-space:pre;">Paginated</div><div style="position:absolute;left:500.00px;top:158.57px;font-size:14.68px;line-height:14.68px;color:#252423;transform:scaleX(1.0431);transform-origin:0 0;white-space:pre;">report</div><div style="position:absolute;left:560.00px;top:139.57px;font-size:14.68px;line-height:14.68px;color:#252423;transform:scaleX(0.9611);transform-origin:0 0;white-space:pre;">Power</div><div style="position:absolute;left:563.00px;top:158.57px;font-size:14.68px;line-height:14.68px;color:#252423;transform:scaleX(1.0162);transform-origin:0 0;white-space:pre;">Apps</div><div style="position:absolute;left:620.00px;top:139.57px;font-size:14.68px;line-height:14.68px;color:#252423;transform:scaleX(0.9611);transform-origin:0 0;white-space:pre;">Power</div><div style="position:absolute;left:607.50px;top:158.57px;font-size:14.68px;line-height:14.68px;color:#252423;transform:scaleX(1.0345);transform-origin:0 0;white-space:pre;">Automate</div><div style="position:absolute;left:708.00px;top:139.57px;font-size:14.68px;line-height:14.68px;color:#252423;transform:scaleX(0.9657);transform-origin:0 0;white-space:pre;">Text</div><div style="position:absolute;left:709.00px;top:158.57px;font-size:14.68px;line-height:14.68px;color:#252423;transform:scaleX(1.0142);transform-origin:0 0;white-space:pre;">box</div><div style="position:absolute;left:749.00px;top:139.57px;font-size:14.68px;line-height:14.68px;color:#252423;transform:scaleX(1.0044);transform-origin:0 0;white-space:pre;">Buttons</div><div style="position:absolute;left:804.50px;top:139.57px;font-size:14.68px;line-height:14.68px;color:#252423;transform:scaleX(0.9438);transform-origin:0 0;white-space:pre;">Shapes</div><div style="position:absolute;left:858.00px;top:139.57px;font-size:14.68px;line-height:14.68px;color:#252423;transform:scaleX(0.9805);transform-origin:0 0;white-space:pre;">Image</div><div style="position:absolute;left:938.50px;top:139.57px;font-size:14.68px;line-height:14.68px;color:#c8c6c4;transform:scaleX(0.9121);transform-origin:0 0;white-space:pre;">Add a</div><div style="position:absolute;left:926.50px;top:158.57px;font-size:14.68px;line-height:14.68px;color:#c8c6c4;transform:scaleX(1.0042);transform-origin:0 0;white-space:pre;">sparkline</div><div style="position:absolute;left:20.50px;top:184.92px;font-size:12.50px;line-height:12.50px;color:#605e5c;transform:scaleX(0.8748);transform-origin:0 0;white-space:pre;">Pages</div><div style="position:absolute;left:119.50px;top:184.92px;font-size:12.50px;line-height:12.50px;color:#605e5c;transform:scaleX(1.0231);transform-origin:0 0;white-space:pre;">Visuals</div><div style="position:absolute;left:316.00px;top:184.92px;font-size:12.50px;line-height:12.50px;color:#605e5c;transform:scaleX(0.9348);transform-origin:0 0;white-space:pre;">AI visuals</div><div style="position:absolute;left:538.50px;top:184.92px;font-size:12.50px;line-height:12.50px;color:#605e5c;transform:scaleX(0.9713);transform-origin:0 0;white-space:pre;">Power Platform</div><div style="position:absolute;left:775.50px;top:184.92px;font-size:12.50px;line-height:12.50px;color:#605e5c;transform:scaleX(0.9405);transform-origin:0 0;white-space:pre;">Elements</div><div style="position:absolute;left:928.00px;top:184.92px;font-size:12.50px;line-height:12.50px;color:#605e5c;transform:scaleX(0.9595);transform-origin:0 0;white-space:pre;">Sparklines</div><svg style="position:absolute;left:48.3px;top:166px;" width="8" height="5" viewBox="0 0 8 5"><path d="M.8 .8L4 4 7.2.8" fill="none" stroke="#252423" stroke-width="1.3"/></svg><svg style="position:absolute;left:182.5px;top:166.3px;" width="8" height="5" viewBox="0 0 8 5"><path d="M.8 .8L4 4 7.2.8" fill="none" stroke="#252423" stroke-width="1.3"/></svg><svg style="position:absolute;left:769px;top:165px;" width="8" height="5" viewBox="0 0 8 5"><path d="M.8 .8L4 4 7.2.8" fill="none" stroke="#252423" stroke-width="1.3"/></svg><svg style="position:absolute;left:823px;top:165px;" width="8" height="5" viewBox="0 0 8 5"><path d="M.8 .8L4 4 7.2.8" fill="none" stroke="#252423" stroke-width="1.3"/></svg><svg style="position:absolute;left:1902px;top:185px;" width="12" height="8" viewBox="0 0 12 8"><path d="M1 6.5L6 1.5l5 5" fill="none" stroke="#252423" stroke-width="1.5"/></svg><svg style="position:absolute;left:14px;top:91px;" width="44" height="44" viewBox="0 0 44 44"><path d="M14 5.5h24v20.5L25.5 38.5H6.5V21" fill="none" stroke="#3b3a39" stroke-width="1.4"/><path d="M25.5 38.5V26H38" fill="none" stroke="#3b3a39" stroke-width="1.4"/><path d="M2 11h19M11.5 2v19" stroke="#3aa848" stroke-width="1.4"/></svg><svg style="position:absolute;left:90px;top:93px;" width="42" height="42" viewBox="0 0 42 42"><rect x="3" y="16.5" width="10" height="21" fill="#87bff0" stroke="#1f7ad6" stroke-width="1.2"/><rect x="13.5" y="2.5" width="10.5" height="35" fill="#fafafa" stroke="#3b3a39" stroke-width="1.3"/><rect x="24" y="9" width="10" height="28.5" fill="#c8c6c4" stroke="#3b3a39" stroke-width="1"/><path d="M20 30.5h19M29.5 21v19" stroke="#3aa848" stroke-width="1.4"/></svg><svg style="position:absolute;left:146px;top:93px;" width="42" height="42" viewBox="0 0 42 42"><path d="M3.5 37.5V16.5H13.5M13.5 37.5V2.5H24V37.5M24 9H34V37.5H3.5" fill="none" stroke="#3b3a39" stroke-width="1.3"/><path d="M14.5 39l2.5-7.5L35.5 13c1.3-1.3 3-1.3 4.2-.2 1.2 1.2 1.2 3 0 4.2L21.5 35.5z" fill="#fafafa" stroke="#1f7ad6" stroke-width="1.3"/><path d="M14.5 39l2.5-7.5 4.5 4z" fill="#87bff0" stroke="#1f7ad6" stroke-width="1"/><path d="M33.5 15l4 4" stroke="#1f7ad6" stroke-width="1"/></svg><svg style="position:absolute;left:236px;top:93px;" width="42" height="42" viewBox="0 0 42 42"><path d="M3 2v36h36" fill="none" stroke="#3b3a39" stroke-width="1.3"/><path d="M3 9.5h26" stroke="#1f7ad6" stroke-width="1.3"/><circle cx="31.5" cy="9.5" r="3.2" fill="#87bff0" stroke="#1f7ad6" stroke-width="1.2"/><path d="M3 18h16.5" stroke="#3b3a39" stroke-width="1.3"/><circle cx="22" cy="18" r="2.6" fill="#a19f9d" stroke="#3b3a39" stroke-width="1"/><path d="M3 26.7h9.5" stroke="#3b3a39" stroke-width="1.3"/><circle cx="15" cy="26.7" r="2.6" fill="#a19f9d" stroke="#3b3a39" stroke-width="1"/></svg><svg style="position:absolute;left:326px;top:93px;" width="42" height="42" viewBox="0 0 42 42"><rect x="3" y="15.5" width="13.5" height="7.5" fill="#87bff0" stroke="#1f7ad6" stroke-width="1.3"/><rect x="24" y="3" width="13" height="8" fill="#87bff0" stroke="#1f7ad6" stroke-width="1.3"/><rect x="24" y="15.5" width="13" height="7.5" fill="#87bff0" stroke="#1f7ad6" stroke-width="1.3"/><rect x="24" y="28" width="13" height="8" fill="#87bff0" stroke="#1f7ad6" stroke-width="1.3"/><path d="M16.5 19.2h7.5M20 7v25M20 7h4M20 32h4" fill="none" stroke="#3b3a39" stroke-width="1.2"/></svg><svg style="position:absolute;left:414px;top:93px;" width="34" height="42" viewBox="0 0 34 42"><path d="M6.5 17V2.5h16l8 8.5v27H6.5V21" fill="none" stroke="#3b3a39" stroke-width="1.4"/><path d="M22.5 2.5V11h8" fill="none" stroke="#3b3a39" stroke-width="1.2"/><circle cx="5" cy="19" r="3" fill="#87bff0" stroke="#1f7ad6" stroke-width="1.2"/><path d="M12 15h11M9.5 20h11M12 24.7h11" stroke="#1f7ad6" stroke-width="1.4"/></svg><svg style="position:absolute;left:503px;top:93px;" width="34" height="42" viewBox="0 0 34 42"><path d="M3.5 2.2h18.5l8.7 8.8v26.2H3.5z" fill="none" stroke="#3b3a39" stroke-width="1.6"/><path d="M22 2.2V11h8.7" fill="none" stroke="#3b3a39" stroke-width="1.3"/><rect x="7" y="22" width="5.2" height="11.6" fill="#3b3a39"/><rect x="14.4" y="27" width="5.1" height="6.6" fill="#3b3a39"/><rect x="22" y="18.2" width="4.8" height="15.4" fill="#3b3a39"/></svg><svg style="position:absolute;left:560px;top:93px;" width="40" height="40" viewBox="0 0 40 40"><path d="M19.5 7.0 16.8 4.2 L2.7 19.6 16.8 35.7 19.5 32.6" fill="none" stroke="#9b33b5" stroke-width="1.3" stroke-linejoin="round"/><path d="M23.0 4.0 L37.5 19.6 23.0 35.7 16.0 27.6 23.0 19.6 16.0 11.7Z" fill="none" stroke="#9b33b5" stroke-width="1.3" stroke-linejoin="round"/><path d="M30.2 11.7 L23.0 19.6 30.2 27.6" fill="none" stroke="#9b33b5" stroke-width="1.3"/></svg><svg style="position:absolute;left:620px;top:93px;" width="40" height="40" viewBox="0 0 40 40"><path d="M3.2 5.6 L25.5 5.6 37.6 19.4 25.5 33.4 3.2 33.4 13.0 19.4Z" fill="none" stroke="#1d7fe0" stroke-width="1.4" stroke-linejoin="round"/><path d="M24.5 6.0 L3.8 33.0M31.3 12.8 L14.4 33.4" fill="none" stroke="#1d7fe0" stroke-width="1.3"/></svg><svg style="position:absolute;left:698px;top:94px;" width="46" height="38" viewBox="0 0 46 38"><rect x="4.5" y="3.5" width="36" height="30" fill="none" stroke="#3b3a39" stroke-width="1.4"/><rect x="2" y="1" width="5" height="5" fill="#1f7ad6"/><rect x="38" y="1" width="5" height="5" fill="#1f7ad6"/><rect x="2" y="31" width="5" height="5" fill="#1f7ad6"/><rect x="38" y="31" width="5" height="5" fill="#1f7ad6"/><path d="M15.5 27L22.5 8.5 29.5 27M18 21h9" fill="none" stroke="#1f7ad6" stroke-width="1.4"/></svg><svg style="position:absolute;left:754px;top:95px;" width="40" height="40" viewBox="0 0 40 40"><path d="M20 20H3V3h35v17h-3" fill="none" stroke="#3b3a39" stroke-width="1.4"/><circle cx="9.5" cy="9.5" r="2.5" fill="#87bff0" stroke="#1f7ad6" stroke-width="1.2"/><path d="M15 9.5h16" stroke="#3b3a39" stroke-width="1.4"/><path d="M23 13v16l4-3.5 3 6 3-1.5-3-6h5.5z" fill="#fafafa" stroke="#3b3a39" stroke-width="1.2"/></svg><svg style="position:absolute;left:807px;top:93px;" width="44" height="44" viewBox="0 0 44 44"><rect x="2.5" y="2" width="24" height="24" fill="#87bff0" stroke="#1f7ad6" stroke-width="1.4"/><circle cx="25.5" cy="25" r="12.2" fill="#fafafa" stroke="#3b3a39" stroke-width="1.5"/></svg><svg style="position:absolute;left:858px;top:97px;" width="40" height="32" viewBox="0 0 40 32"><rect x="2.5" y="2.5" width="35" height="25.5" fill="none" stroke="#3b3a39" stroke-width="1.6"/><path d="M3.5 17L12 8l13 12.5L28 17l9 10.5H3.5z" fill="#87bff0" stroke="#1f7ad6" stroke-width="1.1"/><path d="M25 20.5l7 7" stroke="#1f7ad6" stroke-width="1.1"/><circle cx="30" cy="8.3" r="2" fill="#d47500"/></svg><svg style="position:absolute;left:936px;top:95px;" width="40" height="38" viewBox="0 0 40 38"><path d="M5.5 1v30M1 6h35M1 26h35" stroke="#bdbbb9" stroke-width="1.6"/><path d="M6 19l6-7 5 7 6-8 4 6 5-6 4 5" fill="none" stroke="#b3d3f0" stroke-width="1.2"/></svg><div style="position:absolute;left:0px;top:956px;width:1468px;height:44px;background:#f3f2f1;"></div><div style="position:absolute;left:210px;top:956px;width:1209px;height:44px;background:#ffffff;"></div><div style="position:absolute;left:210px;top:956px;width:1px;height:44px;background:#c8c6c4;"></div><svg style="position:absolute;left:65px;top:964px;" width="26" height="20" viewBox="0 0 26 20"><rect x="1" y="1" width="23" height="13.5" fill="none" stroke="#323130" stroke-width="1.3"/><path d="M12.5 14.5v4M8 18.5h9" stroke="#323130" stroke-width="1.3"/></svg><div style="position:absolute;left:64px;top:991px;width:30px;height:3px;background:#117865;border-radius:1.5px;"></div><svg style="position:absolute;left:125px;top:961px;" width="17" height="28" viewBox="0 0 17 28"><rect x="1" y="1" width="15" height="25" rx="2" fill="none" stroke="#323130" stroke-width="1.3"/><path d="M7 22h3" stroke="#323130" stroke-width="1.3"/></svg><svg style="position:absolute;left:167px;top:971px;" width="8" height="12" viewBox="0 0 8 12"><path d="M7 0v11L0 5.5z" fill="#252423"/></svg><svg style="position:absolute;left:195px;top:971px;" width="8" height="12" viewBox="0 0 8 12"><path d="M1 0v11l7-5.5z" fill="#252423"/></svg><div style="position:absolute;left:235.00px;top:971.00px;font-size:15.12px;line-height:15.12px;color:#252423;transform:scaleX(0.9677);transform-origin:0 0;white-space:pre;">Overview</div><div style="position:absolute;left:322px;top:956px;width:1px;height:44px;background:#d2d0ce;"></div><div style="position:absolute;left:347.40px;top:971.00px;font-size:15.12px;line-height:15.12px;color:#252423;-webkit-text-stroke:0.45px #252423;transform:scaleX(0.9894);transform-origin:0 0;white-space:pre;">Channel Performance</div><div style="position:absolute;left:518.5px;top:956px;width:1px;height:44px;background:#d2d0ce;"></div><div style="position:absolute;left:544.40px;top:971.00px;font-size:15.12px;line-height:15.12px;color:#252423;transform:scaleX(0.9634);transform-origin:0 0;white-space:pre;">Campaign Performance</div><div style="position:absolute;left:724.5px;top:956px;width:1px;height:44px;background:#d2d0ce;"></div><div style="position:absolute;left:750.00px;top:971.00px;font-size:15.12px;line-height:15.12px;color:#252423;transform:scaleX(0.9640);transform-origin:0 0;white-space:pre;">Regional Performance</div><div style="position:absolute;left:920px;top:956px;width:1px;height:44px;background:#d2d0ce;"></div><div style="position:absolute;left:946.00px;top:971.00px;font-size:15.12px;line-height:15.12px;color:#252423;transform:scaleX(0.9718);transform-origin:0 0;white-space:pre;">Client Name Performance</div><div style="position:absolute;left:1140px;top:956px;width:1px;height:44px;background:#d2d0ce;"></div><div style="position:absolute;left:1166.00px;top:971.00px;font-size:15.12px;line-height:15.12px;color:#252423;transform:scaleX(0.9762);transform-origin:0 0;white-space:pre;">Insights &amp; Recommendations Page</div><div style="position:absolute;left:322px;top:995px;width:197px;height:5px;background:#117865;"></div><div style="position:absolute;left:505.60px;top:959.95px;font-size:14.00px;line-height:14.00px;color:#252423;font-weight:700;transform:scaleX(0.9764);transform-origin:0 0;white-space:pre;">x</div><div style="position:absolute;left:1419px;top:956px;width:49px;height:44px;background:#117865;"></div><svg style="position:absolute;left:1435.3px;top:968.7px;" width="16" height="16" viewBox="0 0 16 16"><path d="M8 1v14M1 8h14" stroke="#fff" stroke-width="3.6"/></svg><div style="position:absolute;left:0px;top:1000px;width:1920px;height:30px;background:#f3f2f1;"></div><div style="position:absolute;left:0px;top:1000px;width:1920px;height:1px;background:#e1dfdd;"></div><div style="position:absolute;left:5.50px;top:1009.05px;font-size:14.83px;line-height:14.83px;color:#605e5c;transform:scaleX(0.9626);transform-origin:0 0;white-space:pre;">Page 2 of 6</div><div style="position:absolute;left:1655px;top:1014.5px;width:6px;height:2px;background:#605e5c;"></div><div style="position:absolute;left:1667px;top:1015px;width:125px;height:1px;background:#8a8886;"></div><div style="position:absolute;left:1692px;top:1009px;width:5px;height:13px;background:#605e5c;border-radius:1px;"></div><div style="position:absolute;left:1729px;top:1011px;width:1px;height:8px;background:#8a8886;"></div><svg style="position:absolute;left:1798px;top:1008px;" width="12" height="14" viewBox="0 0 12 14"><path d="M6 1v12M0 7h12" stroke="#605e5c" stroke-width="1.6"/></svg><div style="position:absolute;left:1825.00px;top:1008.69px;font-size:14.54px;line-height:14.54px;color:#605e5c;transform:scaleX(0.9627);transform-origin:0 0;white-space:pre;">50%</div><svg style="position:absolute;left:1877px;top:1008px;" width="21" height="16" viewBox="0 0 21 16"><path d="M1 5V1h5M15 1h5v4M20 11v4h-5M6 15H1v-4" fill="none" stroke="#605e5c" stroke-width="1.4"/><rect x=".5" y=".5" width="20" height="15" fill="none" stroke="#605e5c" stroke-width="1"/></svg><div style="position:absolute;left:0px;top:1029px;width:1920px;height:1px;background:#1a1a1a;"></div><div style="position:absolute;left:0px;top:1030px;width:1920px;height:50px;background:#3a2a23;"></div><svg style="position:absolute;left:20px;top:1045px;" width="20" height="20" viewBox="0 0 20 20"><path d="M0 2.8L8.2 1.7V9.5H0zM9.2 1.5L20 0v9.5H9.2zM0 10.5h8.2v7.8L0 17.2zM9.2 10.5H20V20L9.2 18.5z" fill="#fff"/></svg><div style="position:absolute;left:60px;top:1030px;width:430px;height:50px;background:#f0f0f0;border-bottom:1px solid #999;box-sizing:border-box;"></div><svg style="position:absolute;left:74px;top:1044px;" width="22" height="22" viewBox="0 0 22 22"><circle cx="13.5" cy="8.5" r="7" fill="none" stroke="#1a1a1a" stroke-width="1.5"/><path d="M8.5 13.5L1 21" stroke="#1a1a1a" stroke-width="1.6"/></svg><div style="position:absolute;left:110.50px;top:1045.63px;font-size:19.33px;line-height:19.33px;color:#1a1a1a;transform:scaleX(0.9540);transform-origin:0 0;white-space:pre;">Type here to search</div><svg style="position:absolute;left:508px;top:1043px;" width="24" height="24" viewBox="0 0 24 24"><circle cx="12" cy="12" r="9" fill="none" stroke="#fff" stroke-width="2.2"/></svg><svg style="position:absolute;left:569px;top:1044px;" width="24" height="22" viewBox="0 0 24 22"><rect x="1" y="4" width="12" height="14" fill="none" stroke="#fff" stroke-width="1.3"/><path d="M0 1h14M0 21h14M18 1v20" stroke="#fff" stroke-width="1.3"/><rect x="17" y="6" width="2.5" height="3" fill="#fff"/></svg><svg style="position:absolute;left:627px;top:1039px;" width="32" height="32" viewBox="0 0 32 32"><circle cx="16" cy="16" r="15" fill="#db4437"/><path d="M16 16L3 23.5A15 15 0 0 0 16 31z" fill="#0f9d58"/><path d="M3 23.5A15 15 0 0 1 4 8.5L16 16z" fill="#0f9d58"/><path d="M16 16L29 23.5A15 15 0 0 1 16 31z" fill="#f4b400"/><path d="M16 16h15A15 15 0 0 1 29 23.5z" fill="#f4b400"/><circle cx="16" cy="16" r="7" fill="#fff"/><circle cx="16" cy="16" r="5.6" fill="#4285f4"/></svg><svg style="position:absolute;left:691px;top:1040px;" width="30" height="30" viewBox="0 0 30 30"><path d="M9 6V4c0-2 2-3 6-3s6 1 6 3v2" fill="none" stroke="#1e90ff" stroke-width="2"/><rect x="1" y="6" width="28" height="23" rx="3" fill="#f4f4f4"/><rect x="9" y="11" width="5" height="5" fill="#f35325"/><rect x="15" y="11" width="5" height="5" fill="#81bc06"/><rect x="9" y="17" width="5" height="5" fill="#05a6f0"/><rect x="15" y="17" width="5" height="5" fill="#ffba08"/></svg><svg style="position:absolute;left:753px;top:1042px;" width="30" height="28" viewBox="0 0 30 28"><path d="M1 3h10l3 3h15v19H1z" fill="#e8b43a"/><rect x="1" y="8" width="28" height="17" fill="#f7c85a"/><path d="M7 25v-8h16v8h-4v-4h-8v4z" fill="#2b88d8"/></svg><svg style="position:absolute;left:815px;top:1041px;" width="30" height="28" viewBox="0 0 30 28"><path d="M1 10L15 1l14 9v17H1z" fill="#0f6cbd"/><path d="M1 10l14 9 14-9v17H1z" fill="#3aa0f3"/><path d="M1 10l14 9 14-9" fill="none" stroke="#fff" stroke-width="2"/></svg><svg style="position:absolute;left:876px;top:1040px;" width="40" height="36" viewBox="0 0 40 36"><circle cx="15" cy="15" r="15" fill="#1877f2"/><path d="M17 30V19h3.5l.5-4h-4v-2.5c0-1.2.4-2 2-2h2V7c-.4 0-1.6-.2-3-.2-3 0-5 1.8-5 5.2V15H9.5v4H13v11z" fill="#fff"/><circle cx="29" cy="26" r="9.5" fill="#2a2420" stroke="#aaa" stroke-width="1"/></svg><div style="position:absolute;left:899.00px;top:1055.92px;font-size:13.08px;line-height:13.08px;color:#fff;-webkit-text-stroke:0.39px #fff;transform:scaleX(0.8249);transform-origin:0 0;white-space:pre;">21</div><div style="position:absolute;left:924px;top:1030px;width:61px;height:50px;background:#5a4d46;"></div><div style="position:absolute;left:924px;top:1077px;width:61px;height:3px;background:#7ab4e8;"></div><svg style="position:absolute;left:941px;top:1040px;" width="26" height="30" viewBox="0 0 26 30"><rect x="15" y="1" width="9" height="28" rx="1.5" fill="#e8ab10"/><rect x="8" y="8" width="9" height="21" rx="1.5" fill="#f2c811"/><rect x="1" y="15" width="9" height="14" rx="1.5" fill="#f8dc6a"/></svg><svg style="position:absolute;left:1000px;top:1040px;" width="32" height="30" viewBox="0 0 32 30"><path d="M22 1l8 4v20l-8 4L8 16l-5 4-2-1V11l2-1 5 4z" fill="#1f9cf0"/><path d="M22 8v14l-8-7z" fill="#3c302a"/></svg><svg style="position:absolute;left:1063px;top:1040px;" width="30" height="30" viewBox="0 0 30 30"><rect x="1" y="1" width="28" height="28" rx="3" fill="#2f6fa8"/><path d="M5 22c4-1 6-6 10-9 3-2 6-2 8 0" fill="none" stroke="#cfe3f4" stroke-width="1.3"/><path d="M22 4l4 4" stroke="#fff" stroke-width="2"/></svg><svg style="position:absolute;left:1124px;top:1040px;" width="30" height="30" viewBox="0 0 30 30"><rect x="8" y="1" width="22" height="28" rx="2" fill="#21a366"/><rect x="8" y="1" width="22" height="10" fill="#33c481"/><rect x="1" y="8" width="15" height="15" rx="1.5" fill="#107c41"/><path d="M5 12l7 8M12 12l-7 8" stroke="#fff" stroke-width="1.8"/></svg><svg style="position:absolute;left:1187px;top:1040px;" width="30" height="30" viewBox="0 0 30 30"><path d="M1 1h20l8 8v20H8l-7-7z" fill="#21d789"/><path d="M21 1l8 8v13z" fill="#fcf84a"/><rect x="6" y="6" width="18" height="18" fill="#000"/><text x="8" y="15" font-size="8" font-weight="700" fill="#fff" font-family="Liberation Sans">PC</text><rect x="8" y="19" width="7" height="1.5" fill="#fff"/></svg><svg style="position:absolute;left:1249px;top:1040px;" width="30" height="30" viewBox="0 0 30 30"><circle cx="15" cy="15" r="14.5" fill="#1ed760"/><path d="M7 11c5-1.5 11-1 16 1.5M8 15.5c4-1 9-.8 13 1.2M9 19.5c3.5-.8 7-.6 10 .8" fill="none" stroke="#000" stroke-width="2.2" stroke-linecap="round"/></svg><div style="position:absolute;left:1240px;top:1077px;width:50px;height:3px;background:#7ab4e8;"></div><svg style="position:absolute;left:1309px;top:1039px;" width="32" height="32" viewBox="0 0 32 32"><circle cx="16" cy="16" r="15" fill="#db4437"/><path d="M16 16L3 23.5A15 15 0 0 0 16 31z" fill="#0f9d58"/><path d="M3 23.5A15 15 0 0 1 4 8.5L16 16z" fill="#0f9d58"/><path d="M16 16L29 23.5A15 15 0 0 1 16 31z" fill="#f4b400"/><path d="M16 16h15A15 15 0 0 1 29 23.5z" fill="#f4b400"/><circle cx="16" cy="16" r="7" fill="#fff"/><circle cx="16" cy="16" r="5.6" fill="#4285f4"/></svg><svg style="position:absolute;left:1317px;top:1057px;" width="18" height="18" viewBox="0 0 18 18"><circle cx="9" cy="9" r="8" fill="#4466aa" stroke="#ccc" stroke-width="1.5"/></svg><div style="position:absolute;left:1301px;top:1077px;width:51px;height:3px;background:#7ab4e8;"></div><svg style="position:absolute;left:1371px;top:1038px;" width="32" height="34" viewBox="0 0 32 34"><path d="M8 6c4-5 14-5 18 2" fill="none" stroke="#e03a3a" stroke-width="3"/><path d="M17 4v16" stroke="#fff" stroke-width="2.5"/><circle cx="9" cy="26" r="3.5" fill="none" stroke="#2b88d8" stroke-width="2.2"/><circle cx="19" cy="27" r="3.5" fill="none" stroke="#2b88d8" stroke-width="2.2"/><path d="M11 23l6-8M17 24l-2-9" stroke="#fff" stroke-width="1.4"/></svg><div style="position:absolute;left:1363px;top:1077px;width:51px;height:3px;background:#7ab4e8;"></div><svg style="position:absolute;left:1603px;top:1049px;" width="18" height="10" viewBox="0 0 18 10"><path d="M1 9l8-8 8 8" fill="none" stroke="#fff" stroke-width="1.3"/></svg><svg style="position:absolute;left:1634px;top:1047px;" width="18" height="16" viewBox="0 0 18 16"><path d="M1 15a14 14 0 0 1 14-14M4 15a11 11 0 0 1 11-11M7 15a8 8 0 0 1 8-8M10 15a5 5 0 0 1 5-5" fill="none" stroke="#fff" stroke-width="1"/><circle cx="14.5" cy="14" r="1.5" fill="#fff"/></svg><svg style="position:absolute;left:1661px;top:1047px;" width="22" height="16" viewBox="0 0 22 16"><rect x="4" y="5" width="15" height="9" fill="none" stroke="#fff" stroke-width="1.2"/><rect x="6" y="7" width="11" height="5" fill="#fff"/><rect x="19" y="7.5" width="2" height="4" fill="#fff"/><path d="M2 1v3M5 1v3M1 4h5v3" stroke="#fff" stroke-width="1"/></svg><svg style="position:absolute;left:1691px;top:1046px;" width="22" height="18" viewBox="0 0 22 18"><path d="M1 6h4l5-4v14l-5-4H1z" fill="none" stroke="#fff" stroke-width="1.1"/><path d="M13 6a4 4 0 0 1 0 6M16 4a7 7 0 0 1 0 10M19 2a10 10 0 0 1 0 14" fill="none" stroke="#bbb" stroke-width="1"/></svg><div style="position:absolute;left:1735.00px;top:1051.92px;font-size:13.08px;line-height:13.08px;color:#fff;transform:scaleX(0.8154);transform-origin:0 0;white-space:pre;">ع</div><div style="position:absolute;left:1782.00px;top:1036.06px;font-size:14.10px;line-height:14.10px;color:#fff;transform:scaleX(0.9713);transform-origin:0 0;white-space:pre;">6:31 PM</div><div style="position:absolute;left:1770.00px;top:1059.56px;font-size:14.10px;line-height:14.10px;color:#fff;transform:scaleX(1.0637);transform-origin:0 0;white-space:pre;">2025-11-28</div><svg style="position:absolute;left:1868px;top:1044px;" width="22" height="22" viewBox="0 0 22 22"><path d="M1 1h20v15H12l-2 3-2-3H1z" fill="none" stroke="#fff" stroke-width="1.3"/></svg><div style="position:absolute;left:1914px;top:1030px;width:1px;height:50px;background:#6a5f58;"></div><svg style="position:absolute;left:820px;top:930px;pointer-events:none" width="280" height="150" viewBox="820 930 280 150"><g opacity="0.36" fill="none" stroke="#969696" stroke-width="10" stroke-linecap="round"><path d="M885 956V1003c0 6-4 10-10 10h-10a15 15 0 1 1 0-30h10"/><circle cx="921" cy="990" r="14"/><path d="M921 1009H1050"/><path d="M964 972v32M981 972v32"/><circle cx="1054" cy="998" r="15"/></g><g opacity="0.36" fill="#969696"><circle cx="913" cy="958" r="6.5"/><circle cx="932" cy="958" r="6.5"/></g></svg><div style="position:absolute;left:0;top:0;opacity:0.36;pointer-events:none;"><div style="position:absolute;left:845.00px;top:1017.39px;font-size:38.52px;line-height:38.52px;color:#969696;font-weight:700;transform:scaleX(0.9639);transform-origin:0 0;white-space:pre;">mostaql.com</div></div></body></html>
